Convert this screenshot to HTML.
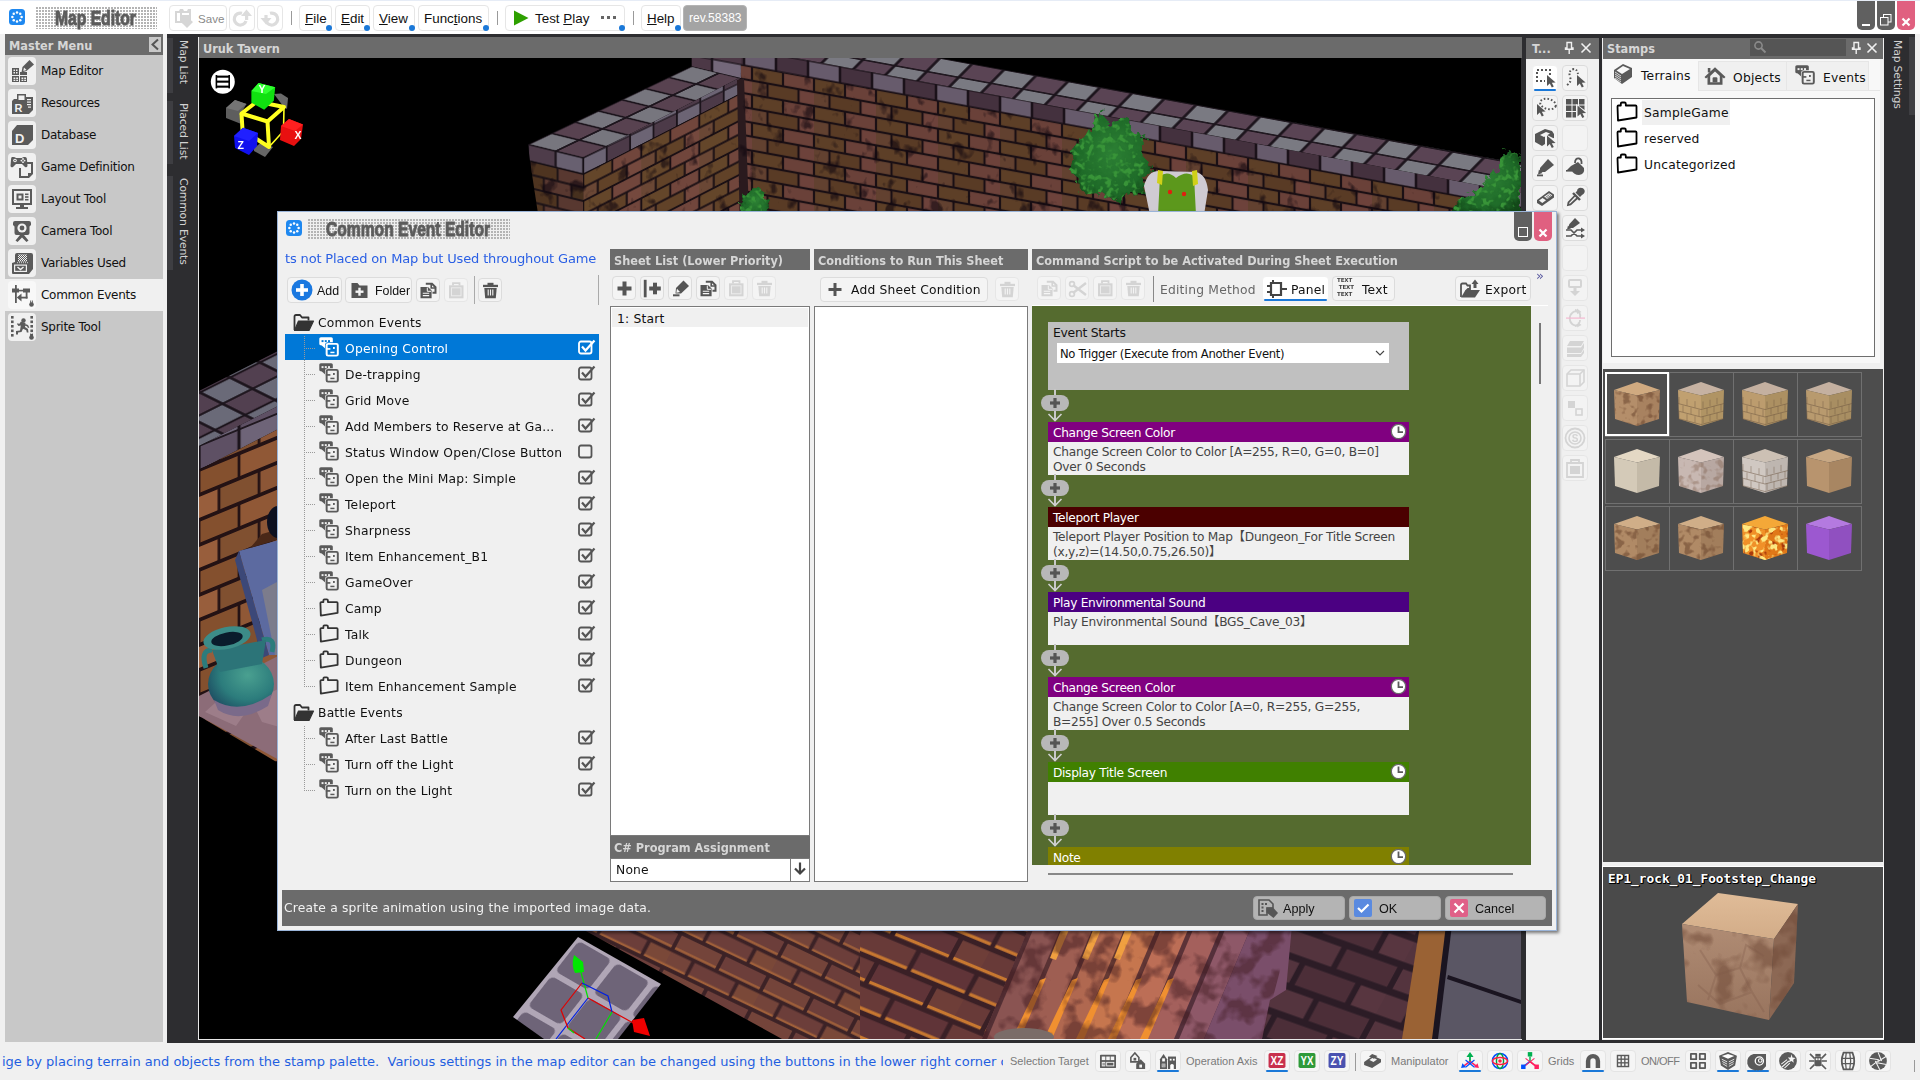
<!DOCTYPE html>
<html><head><meta charset="utf-8"><title>Map Editor</title>
<style>
*{box-sizing:border-box;margin:0;padding:0}
html,body{width:1920px;height:1080px;overflow:hidden;background:#f0f0f0}
body{font-family:"DejaVu Sans","Liberation Sans","Noto Sans CJK JP",sans-serif;font-size:13px;color:#111;position:relative}
div,svg{position:absolute}
.t{white-space:nowrap;line-height:16px;letter-spacing:-0.1px}
.lib{font-family:"Liberation Sans","DejaVu Sans",sans-serif;letter-spacing:0}
.btn{border:1px solid #dcdcdc;border-radius:4px;background:#f4f4f4}
.btnw{border:1px solid #e2e2e2;border-radius:4px;background:#fcfcfc}
.sel{background:#fff;border-color:#f0f0f0}
.sel:after{content:"";position:absolute;left:1px;right:1px;bottom:-1px;height:2px;background:#1a78d8;border-radius:1px}
.hdr{background:#6b6b6b;color:#d6d6d6;font-family:"DejaVu Sans Condensed","DejaVu Sans",sans-serif;font-weight:bold;white-space:nowrap;line-height:20px;padding-left:4px;overflow:hidden;letter-spacing:0}
.m{font-size:12.3px;letter-spacing:0.2px;margin-top:1px}
.u{font-size:12px;letter-spacing:-0.27px}
.dots{background-color:#b4b4b4;background-image:linear-gradient(#fff 1px,transparent 1px),linear-gradient(90deg,#fff 1px,transparent 1px);background-size:3px 3px}
.dots2{background-image:linear-gradient(#f0f0f0 1px,transparent 1px),linear-gradient(90deg,#f0f0f0 1px,transparent 1px)}
.title{font-family:"Liberation Sans","DejaVu Sans",sans-serif;font-weight:bold;color:#5c5c5c;white-space:nowrap;transform-origin:0 0;-webkit-text-stroke:0.9px #5c5c5c;text-shadow:1px 1px 0 #d0d0d0}
.vt{writing-mode:vertical-rl;white-space:nowrap;color:#d2d2d2;font-size:10.8px;letter-spacing:-0.15px}
</style></head>
<body>
<svg width="0" height="0" style="position:absolute"><defs><pattern id="chk" width="2" height="2" patternUnits="userSpaceOnUse"><rect width="1" height="1" fill="#5a5a5a"/><rect x="1" y="1" width="1" height="1" fill="#5a5a5a"/></pattern></defs></svg>
<div style="left:0px;top:0px;width:1920px;height:34px;background:#fff"></div>
<div style="left:0px;top:0px;width:1920px;height:1px;background:#e6ecf6"></div>
<svg style="left:9px;top:9px;" width="16" height="16" viewBox="0 0 16 16"><rect x="0" y="0" width="16" height="16" rx="3.5" fill="#1e88f0"/><circle cx="12.60" cy="8.00" r="1.25" fill="#fff"/><circle cx="11.25" cy="11.25" r="1.25" fill="#fff"/><circle cx="8.00" cy="12.60" r="1.25" fill="#fff"/><circle cx="4.75" cy="11.25" r="1.25" fill="#fff"/><circle cx="3.40" cy="8.00" r="1.25" fill="#fff"/><circle cx="4.75" cy="4.75" r="1.25" fill="#fff"/><circle cx="8.00" cy="3.40" r="1.25" fill="#fff"/><circle cx="11.25" cy="4.75" r="1.25" fill="#fff"/></svg>
<div class="dots" style="left:35px;top:6px;width:122px;height:23px;"></div>
<div class="title" style="left:55px;top:6px;font-size:21px;line-height:23px;transform:scaleX(0.745);">Map Editor</div>
<div class="btn" style="left:169px;top:5px;width:58px;height:26px;background:#fff;border-color:#e6e6e6"></div>
<svg style="left:174px;top:8px;" width="21" height="21" viewBox="0 0 21 21"><g fill="#d6d6d6"><path d="M1 3 H5 L6 1 H9 L10 3 H13 L14 1 H17 V12 L12 17 L8 15 H1Z"/></g><g fill="#fff"><path d="M3 5 H6 V13 H3Z"/><path d="M8 5 H15 V7 H8Z"/></g><path d="M12 8 L19 14 L13 20 L7 14Z" fill="#d6d6d6"/></svg>
<div class="t lib" style="left:198px;top:11px;color:#8a8a8a;font-size:11.6px">Save</div>
<div class="btn" style="left:229px;top:5px;width:26px;height:26px;background:#fff;border-color:#e6e6e6"></div>
<div class="btn" style="left:257px;top:5px;width:26px;height:26px;background:#fff;border-color:#e6e6e6"></div>
<svg style="left:231px;top:7px;" width="22" height="22" viewBox="0 0 22 22"><path d="M15 14 A6 6 0 1 1 11 6.3" fill="none" stroke="#dcdcdc" stroke-width="3.2"/><path d="M10 9 L15.5 2.5 L21 9Z" fill="#dcdcdc"/><rect x="14" y="8" width="3.2" height="5" fill="#dcdcdc"/></svg>
<svg style="left:259px;top:7px;transform:scale(1,1)" width="22" height="22" viewBox="0 0 22 22"><path d="M7 14 A6 6 0 1 0 11 6.3" fill="none" stroke="#dcdcdc" stroke-width="3.2" transform="translate(0,0)"/><path d="M1.5 11 L7 17.5 L12.5 11Z" fill="#dcdcdc"/><rect x="5.4" y="8" width="3.2" height="4" fill="#dcdcdc"/></svg>
<div style="left:291px;top:11px;width:1px;height:14px;background:#9a9a9a"></div>
<div class="btn" style="left:299px;top:5px;width:33px;height:26px;background:#fff;border-color:#e6e6e6"></div><div class="t lib" style="left:305px;top:11px;font-size:13.4px;color:#111"><u>F</u>ile</div><div style="left:326px;top:25px;width:6px;height:6px;background:#1a78d8;border-radius:3px"></div>
<div class="btn" style="left:335px;top:5px;width:35px;height:26px;background:#fff;border-color:#e6e6e6"></div><div class="t lib" style="left:341px;top:11px;font-size:13.4px;color:#111"><u>E</u>dit</div><div style="left:364px;top:25px;width:6px;height:6px;background:#1a78d8;border-radius:3px"></div>
<div class="btn" style="left:373px;top:5px;width:42px;height:26px;background:#fff;border-color:#e6e6e6"></div><div class="t lib" style="left:379px;top:11px;font-size:13.4px;color:#111"><u>V</u>iew</div><div style="left:409px;top:25px;width:6px;height:6px;background:#1a78d8;border-radius:3px"></div>
<div class="btn" style="left:418px;top:5px;width:71px;height:26px;background:#fff;border-color:#e6e6e6"></div><div class="t lib" style="left:424px;top:11px;font-size:13.4px;color:#111">Func<u>t</u>ions</div><div style="left:483px;top:25px;width:6px;height:6px;background:#1a78d8;border-radius:3px"></div>
<div style="left:497px;top:11px;width:1px;height:14px;background:#9a9a9a"></div>
<div class="btn" style="left:505px;top:5px;width:120px;height:26px;background:#fff;border-color:#e6e6e6"></div>
<svg style="left:513px;top:10px;" width="16" height="16" viewBox="0 0 16 16"><path d="M1 0.5 L15.5 8 L1 15.5Z" fill="#2ea000"/></svg>
<div class="t lib" style="left:535px;top:11px;font-size:13.4px;color:#111">Test <u>P</u>lay</div>
<div style="left:601px;top:16px;width:3px;height:3px;background:#666"></div>
<div style="left:607px;top:16px;width:3px;height:3px;background:#666"></div>
<div style="left:613px;top:16px;width:3px;height:3px;background:#666"></div>
<div style="left:619px;top:25px;width:6px;height:6px;background:#1a78d8;border-radius:3px"></div>
<div style="left:633px;top:11px;width:1px;height:14px;background:#9a9a9a"></div>
<div class="btn" style="left:641px;top:5px;width:40px;height:26px;background:#fff;border-color:#e6e6e6"></div><div class="t lib" style="left:647px;top:11px;font-size:13.4px;color:#111"><u>H</u>elp</div><div style="left:675px;top:25px;width:6px;height:6px;background:#1a78d8;border-radius:3px"></div>
<div style="left:683px;top:5px;width:64px;height:26px;background:#a4a4a4;border-radius:4px;border:1px solid #b4b4b4"></div>
<div class="t lib" style="left:689px;top:10px;font-size:12px;color:#fff">rev.58383</div>
<div style="left:1857px;top:1px;width:18px;height:29px;background:#606060;border-radius:0 0 5px 5px"></div>
<div style="left:1877px;top:1px;width:18px;height:29px;background:#606060;border-radius:0 0 5px 5px"></div>
<div style="left:1897px;top:1px;width:18px;height:29px;background:#e06080;border-radius:0 0 5px 5px"></div>
<div style="left:1862px;top:24px;width:8px;height:2px;background:#fff"></div>
<svg style="left:1879px;top:13px;" width="14" height="14" viewBox="0 0 14 14"><rect x="4.5" y="1.5" width="7.5" height="7.5" fill="none" stroke="#fff" stroke-width="1"/><rect x="1.5" y="4.5" width="7.5" height="7.5" fill="#606060" stroke="#fff" stroke-width="1"/></svg>
<svg style="left:1901px;top:17px;" width="10" height="10" viewBox="0 0 10 10"><path d="M1.5 1.5 L8.5 8.5 M8.5 1.5 L1.5 8.5" stroke="#fff" stroke-width="2.2"/></svg>
<div style="left:5px;top:34px;width:158px;height:1008px;background:#c8c8c8"></div>
<div class="hdr" style="left:5px;top:34px;width:158px;height:21px;font-size:12.6px;line-height:24px">Master Menu</div>
<div style="left:149px;top:37px;width:12px;height:15px;background:#c8c8c8"></div>
<svg style="left:149px;top:37px;" width="12" height="15" viewBox="0 0 12 15"><path d="M9 2.5 L3.5 7.5 L9 12.5" fill="none" stroke="#555" stroke-width="2"/></svg>
<div style="left:8px;top:57px;width:28px;height:28px;background:#f0f0f0;border-radius:4px"></div>
<svg style="left:8px;top:57px;" width="28" height="28" viewBox="0 0 28 28"><g fill="#5a5a5a"><rect x="4" y="11" width="7" height="7"/><rect x="4" y="19" width="7" height="6"/><rect x="12" y="19" width="7" height="6"/><rect x="12" y="15" width="7" height="3"/><g fill="#f0f0f0"><rect x="5.5" y="12.5" width="1.5" height="1.5"/><rect x="8" y="12.5" width="1.5" height="1.5"/><rect x="5.5" y="15" width="1.5" height="1.5"/><rect x="8" y="15" width="1.5" height="1.5"/><rect x="5.5" y="20.5" width="1.8" height="1.5"/><rect x="8.2" y="20.5" width="1.8" height="1.5"/><rect x="13.5" y="20.5" width="1.8" height="1.5"/><rect x="16.2" y="20.5" width="1.8" height="1.5"/><rect x="5.5" y="22.7" width="1.8" height="1.3"/><rect x="8.2" y="22.7" width="1.8" height="1.3"/><rect x="13.5" y="22.7" width="1.8" height="1.3"/><rect x="16.2" y="22.7" width="1.8" height="1.3"/></g><path d="M21.5 3 L26 7.5 L18.5 14 L13.5 15.5 L14.5 10 Z"/><path d="M16 10.5 L18.5 13 L15.3 14 Z" fill="#f0f0f0"/></g></svg>
<div class="t u" style="left:41px;top:63px;">Map Editor</div>
<div style="left:8px;top:89px;width:28px;height:28px;background:#f0f0f0;border-radius:4px"></div>
<svg style="left:8px;top:89px;" width="28" height="28" viewBox="0 0 28 28"><g fill="#5a5a5a"><path d="M9 5 H18 V8 H25 V21 L21 25 H4 V12 L6 10 H9 Z"/><path d="M10.5 6.5 H16.5 V11 H10.5Z" fill="#f0f0f0"/><g fill="#f0f0f0"><rect x="19" y="10" width="4" height="1.2"/><rect x="19" y="12.5" width="4" height="1.2"/><rect x="19" y="15" width="4" height="1.2"/><rect x="20" y="17.5" width="3" height="1.2"/></g><text x="6.5" y="23" font-family="Liberation Sans" font-weight="bold" font-size="11" fill="#f0f0f0">R</text></g></svg>
<div class="t u" style="left:41px;top:95px;">Resources</div>
<div style="left:8px;top:121px;width:28px;height:28px;background:#f0f0f0;border-radius:4px"></div>
<svg style="left:8px;top:121px;" width="28" height="28" viewBox="0 0 28 28"><g fill="#5a5a5a"><path d="M4 10 L9 4 H25 V19 L20 24 H4 Z"/><text x="7" y="22" font-family="Liberation Sans" font-weight="bold" font-size="13" fill="#f0f0f0">D</text></g></svg>
<div class="t u" style="left:41px;top:127px;">Database</div>
<div style="left:8px;top:153px;width:28px;height:28px;background:#f0f0f0;border-radius:4px"></div>
<svg style="left:8px;top:153px;" width="28" height="28" viewBox="0 0 28 28"><g fill="#5a5a5a"><path d="M4 4 Q3 4 3 7 L2.5 13 Q3 15 5 14 L8 11 H14 L17 14 Q19.5 15 19.5 12.5 L19 7 Q19 4 17 4 Q15 3.5 14 5 H8 Q7 3.5 4 4Z"/><circle cx="7" cy="7.5" r="1.8" fill="#f0f0f0"/><circle cx="7" cy="7.5" r="0.8"/><circle cx="15" cy="6" r="0.9" fill="#f0f0f0"/><circle cx="15" cy="9.2" r="0.9" fill="#f0f0f0"/><circle cx="13.4" cy="7.6" r="0.9" fill="#f0f0f0"/><circle cx="16.6" cy="7.6" r="0.9" fill="#f0f0f0"/><path d="M19 9 H25 V21 L21 25 H11 V15 H13 V23 H20 V20 H23 V11 H19Z"/></g></svg>
<div class="t u" style="left:41px;top:159px;">Game Definition</div>
<div style="left:8px;top:185px;width:28px;height:28px;background:#f0f0f0;border-radius:4px"></div>
<svg style="left:8px;top:185px;" width="28" height="28" viewBox="0 0 28 28"><g fill="#5a5a5a"><path d="M4 4 H24 V20 H4Z M6 6 V18 H22 V6Z" fill-rule="evenodd"/><path d="M8.5 8.5 H15.5 V15.5 H8.5Z M10.5 10.5 V13.5 H13.5 V10.5Z" fill-rule="evenodd"/><rect x="17" y="8.5" width="3.5" height="1.6"/><rect x="17" y="11.2" width="3.5" height="1.6"/><rect x="17" y="13.9" width="3.5" height="1.6"/><path d="M12 20 H16 V22 H20 V24 H8 V22 H12Z"/></g></svg>
<div class="t u" style="left:41px;top:191px;">Layout Tool</div>
<div style="left:8px;top:217px;width:28px;height:28px;background:#f0f0f0;border-radius:4px"></div>
<svg style="left:8px;top:217px;" width="28" height="28" viewBox="0 0 28 28"><g fill="#5a5a5a"><path d="M7 4 H21 Q23 4 23 6 V8 L21.5 9.5 V16 Q21.5 18 19.5 18 H8.5 Q6.5 18 6.5 16 V9.5 L5 8 V6 Q5 4 7 4Z"/><circle cx="14" cy="11" r="4.6" fill="#f0f0f0"/><circle cx="14" cy="11" r="2.4"/><path d="M12 18 H16 L20.5 23.5 L18.5 25 L14 20.5 L9.5 25 L7.5 23.5Z"/></g></svg>
<div class="t u" style="left:41px;top:223px;">Camera Tool</div>
<div style="left:8px;top:249px;width:28px;height:28px;background:#f0f0f0;border-radius:4px"></div>
<svg style="left:8px;top:249px;" width="28" height="28" viewBox="0 0 28 28"><g fill="#5a5a5a"><path d="M9 4 H23 Q25 4 25 6 V20 L21 25 H5 Q4 25 4 24 V14 L7 13 V6 Q7 4 9 4Z"/><rect x="10" y="5.5" width="9" height="7" fill="#f0f0f0"/><rect x="10" y="5.5" width="9" height="7" fill="url(#chk)"/><path d="M6 15.5 H19 V23 H6Z" fill="#f0f0f0"/><path d="M7.2 16.7 H17.8 V21.8 H7.2Z"/><path d="M9.5 18 L12.5 20.5 L15.5 18" stroke="#f0f0f0" stroke-width="1.5" fill="none"/><path d="M9 13.7 H20" stroke="#f0f0f0" stroke-width="0.8" stroke-dasharray="1 1"/></g></svg>
<div class="t u" style="left:41px;top:255px;">Variables Used</div>
<div style="left:5px;top:279px;width:158px;height:32px;background:#f0f0f0"></div>
<div style="left:8px;top:281px;width:28px;height:28px;background:#f8f8f8;border-radius:4px"></div>
<svg style="left:8px;top:281px;" width="28" height="28" viewBox="0 0 28 28"><g fill="#5a5a5a"><rect x="4" y="7.5" width="7" height="4"/><rect x="15" y="7.5" width="7" height="4"/><rect x="7" y="4" width="1.8" height="18"/><rect x="11" y="8.8" width="4" height="1.6"/><rect x="17.7" y="11" width="1.8" height="6.5"/><rect x="11" y="15.7" width="8.5" height="1.8"/><path d="M13.5 12.5 V20.5 L8.8 16.5Z"/><circle cx="23.5" cy="23.5" r="2.3"/><rect x="22.2" y="19.5" width="0.9" height="2.5"/><rect x="23.9" y="19.5" width="0.9" height="2.5"/></g></svg>
<div class="t u" style="left:41px;top:287px;">Common Events</div>
<div style="left:8px;top:313px;width:28px;height:28px;background:#f0f0f0;border-radius:4px"></div>
<svg style="left:8px;top:313px;" width="28" height="28" viewBox="0 0 28 28"><g fill="#5a5a5a"><rect x="3" y="3" width="2.6" height="2.6"/><rect x="22.4" y="3" width="2.6" height="2.6"/><rect x="3" y="7.5" width="2.6" height="2.6"/><rect x="22.4" y="7.5" width="2.6" height="2.6"/><rect x="3" y="12" width="2.6" height="2.6"/><rect x="22.4" y="12" width="2.6" height="2.6"/><rect x="3" y="16.5" width="2.6" height="2.6"/><rect x="22.4" y="16.5" width="2.6" height="2.6"/><rect x="3" y="21" width="2.6" height="2.6"/><rect x="22.4" y="21" width="2.6" height="2.6"/><circle cx="15.5" cy="7.5" r="2.2"/><path d="M13 8.5 L17.5 10 L17 14 L20 16 L20.5 19.5 L18.8 19.5 L18.3 17.2 L15 15.8 L13.5 19 L10 19.5 L10 21.5 L8 21.5 L8 18 L12 17.5 L12.8 12.5 L10.5 13 L9 11 L10 10 L11 11.3Z"/><path d="M17.3 11 L20 12 L21.3 14.5 L20 15 L19 13.3 L17 12.8Z"/><circle cx="23.5" cy="24.5" r="2.3"/><rect x="22.2" y="20.5" width="0.9" height="2.5"/><rect x="23.9" y="20.5" width="0.9" height="2.5"/></g></svg>
<div class="t u" style="left:41px;top:319px;">Sprite Tool</div>
<div style="left:167px;top:34px;width:1748px;height:1009px;background:#2d2d30"></div>
<div style="left:167px;top:38px;width:6px;height:55px;background:#3e3e42"></div>
<div style="left:167px;top:101px;width:6px;height:63px;background:#3e3e42"></div>
<div style="left:167px;top:176px;width:6px;height:94px;background:#3e3e42"></div>
<div class="vt" style="left:177px;top:40px;">Map List</div>
<div class="vt" style="left:177px;top:103px;">Placed List</div>
<div class="vt" style="left:177px;top:178px;">Common Events</div>
<div style="left:1909px;top:37px;width:6px;height:78px;background:#3e3e42"></div>
<div class="vt" style="left:1891px;top:40px;">Map Settings</div>
<div class="hdr" style="left:198px;top:37px;width:1324px;height:21px;font-size:12.6px;border-left:1px solid #e8e8e8;padding-left:4px;line-height:23px">Uruk Tavern</div>
<div style="left:198px;top:58px;width:1px;height:982px;background:#e8e8e8"></div>
<svg style="left:199px;top:58px;" width="1322" height="981" viewBox="199 58 1322 981"><defs><pattern id="cap1" width="2" height="2" patternUnits="userSpaceOnUse" patternTransform="matrix(23.4 -11.2 27.65 6.75 528 144.5)"><rect width="2" height="2" fill="#1c141c"/><rect x="0.05" y="0.05" width="0.9" height="0.9" fill="#77767e"/><rect x="1.05" y="0.05" width="0.9" height="0.9" fill="#584250"/><rect x="0.05" y="1.05" width="0.9" height="0.9" fill="#584250"/><rect x="1.05" y="1.05" width="0.9" height="0.9" fill="#77767e"/></pattern><pattern id="cap1b" width="2" height="2" patternUnits="userSpaceOnUse" patternTransform="matrix(23.4 -11.2 0 16 583.3 158)"><rect width="2" height="2" fill="#1c141c"/><rect x="0.04" y="0.04" width="0.92" height="0.92" fill="#6c6474"/><rect x="1.04" y="0.04" width="0.92" height="0.92" fill="#4c3a48"/><rect x="0.04" y="1.04" width="0.92" height="0.92" fill="#4c3a48"/><rect x="1.04" y="1.04" width="0.92" height="0.92" fill="#6c6474"/></pattern><pattern id="cap1c" width="2" height="2" patternUnits="userSpaceOnUse" patternTransform="matrix(27.65 6.75 0 16 528 144.5)"><rect width="2" height="2" fill="#1c141c"/><rect x="0.04" y="0.04" width="0.92" height="0.92" fill="#4e3c4a"/><rect x="1.04" y="0.04" width="0.92" height="0.92" fill="#686070"/><rect x="0.04" y="1.04" width="0.92" height="0.92" fill="#686070"/><rect x="1.04" y="1.04" width="0.92" height="0.92" fill="#4e3c4a"/></pattern><pattern id="brk1" width="2" height="2" patternUnits="userSpaceOnUse" patternTransform="matrix(29 -14.9 0 13.5 583.3 174)"><rect width="2" height="2" fill="#1c1216"/><rect x="0.035" y="0.080" width="0.930" height="0.840" fill="#6e4e2e"/><rect x="1.035" y="0.080" width="0.930" height="0.840" fill="#7c4e42"/><rect x="2.035" y="0.080" width="0.930" height="0.840" fill="#62442a"/><rect x="-0.465" y="1.080" width="0.930" height="0.840" fill="#74503a"/><rect x="0.535" y="1.080" width="0.930" height="0.840" fill="#6a4a2c"/><rect x="1.535" y="1.080" width="0.930" height="0.840" fill="#805244"/></pattern><pattern id="brk1b" width="2" height="2" patternUnits="userSpaceOnUse" patternTransform="matrix(27.65 6.75 0 13.5 530 161)"><rect width="2" height="2" fill="#1c1216"/><rect x="0.035" y="0.080" width="0.930" height="0.840" fill="#4e3420"/><rect x="1.035" y="0.080" width="0.930" height="0.840" fill="#583830"/><rect x="2.035" y="0.080" width="0.930" height="0.840" fill="#46301e"/><rect x="-0.465" y="1.080" width="0.930" height="0.840" fill="#4e3420"/><rect x="0.535" y="1.080" width="0.930" height="0.840" fill="#583830"/><rect x="1.535" y="1.080" width="0.930" height="0.840" fill="#46301e"/></pattern><pattern id="cap2" width="2" height="2" patternUnits="userSpaceOnUse" patternTransform="matrix(32 5.86 -13.3 13.5 940 58)"><rect width="2" height="2" fill="#1c141c"/><rect x="0.05" y="0.05" width="0.9" height="0.9" fill="#7a7a82"/><rect x="1.05" y="0.05" width="0.9" height="0.9" fill="#5a4454"/><rect x="0.05" y="1.05" width="0.9" height="0.9" fill="#5a4454"/><rect x="1.05" y="1.05" width="0.9" height="0.9" fill="#7a7a82"/></pattern><pattern id="cap2b" width="2" height="2" patternUnits="userSpaceOnUse" patternTransform="matrix(32 5.86 0 16 1000 96)"><rect width="2" height="2" fill="#1c141c"/><rect x="0.04" y="0.04" width="0.92" height="0.92" fill="#74687a"/><rect x="1.04" y="0.04" width="0.92" height="0.92" fill="#4c3846"/><rect x="0.04" y="1.04" width="0.92" height="0.92" fill="#4c3846"/><rect x="1.04" y="1.04" width="0.92" height="0.92" fill="#74687a"/></pattern><pattern id="brk2" width="2" height="2" patternUnits="userSpaceOnUse" patternTransform="matrix(31 5.67 0 14 1000 112)"><rect width="2" height="2" fill="#1c1216"/><rect x="0.035" y="0.080" width="0.930" height="0.840" fill="#68482c"/><rect x="1.035" y="0.080" width="0.930" height="0.840" fill="#774a40"/><rect x="2.035" y="0.080" width="0.930" height="0.840" fill="#5c3e28"/><rect x="-0.465" y="1.080" width="0.930" height="0.840" fill="#6e4a36"/><rect x="0.535" y="1.080" width="0.930" height="0.840" fill="#64442a"/><rect x="1.535" y="1.080" width="0.930" height="0.840" fill="#7a4c42"/></pattern><pattern id="cap3" width="2" height="2" patternUnits="userSpaceOnUse" patternTransform="matrix(30 -15 22.5 11.25 200 392.5)"><rect width="2" height="2" fill="#1c141c"/><rect x="0.05" y="0.05" width="0.9" height="0.9" fill="#6a6a78"/><rect x="1.05" y="0.05" width="0.9" height="0.9" fill="#524050"/><rect x="0.05" y="1.05" width="0.9" height="0.9" fill="#524050"/><rect x="1.05" y="1.05" width="0.9" height="0.9" fill="#6a6a78"/></pattern><pattern id="cap3b" width="2" height="2" patternUnits="userSpaceOnUse" patternTransform="matrix(40 -16.5 0 24 199 446)"><rect width="2" height="2" fill="#1c141c"/><rect x="0.04" y="0.04" width="0.92" height="0.92" fill="#5e5064"/><rect x="1.04" y="0.04" width="0.92" height="0.92" fill="#6e6478"/><rect x="0.04" y="1.04" width="0.92" height="0.92" fill="#6e6478"/><rect x="1.04" y="1.04" width="0.92" height="0.92" fill="#5e5064"/></pattern><pattern id="brk3" width="2" height="2" patternUnits="userSpaceOnUse" patternTransform="matrix(40 -16.5 0 25 199 470)"><rect width="2" height="2" fill="#241214"/><rect x="0.035" y="0.080" width="0.930" height="0.840" fill="#84502e"/><rect x="1.035" y="0.080" width="0.930" height="0.840" fill="#905836"/><rect x="2.035" y="0.080" width="0.930" height="0.840" fill="#7a482a"/><rect x="-0.465" y="1.080" width="0.930" height="0.840" fill="#985e3c"/><rect x="0.535" y="1.080" width="0.930" height="0.840" fill="#805030"/><rect x="1.535" y="1.080" width="0.930" height="0.840" fill="#8c5636"/></pattern><pattern id="fbrk" width="2" height="2" patternUnits="userSpaceOnUse" patternTransform="matrix(44 21 -9 17 575 925)"><rect width="2" height="2" fill="#3c2226"/><rect x="0.040" y="0.100" width="0.920" height="0.800" fill="#74443a"/><rect x="0.040" y="0.780" width="0.920" height="0.12" fill="#a0603a"/><rect x="1.040" y="0.100" width="0.920" height="0.800" fill="#6c3e3a"/><rect x="1.040" y="0.780" width="0.920" height="0.12" fill="#a0603a"/><rect x="2.040" y="0.100" width="0.920" height="0.800" fill="#7a4838"/><rect x="2.040" y="0.780" width="0.920" height="0.12" fill="#a0603a"/><rect x="-0.460" y="1.100" width="0.920" height="0.800" fill="#74443a"/><rect x="-0.460" y="1.780" width="0.920" height="0.12" fill="#a0603a"/><rect x="0.540" y="1.100" width="0.920" height="0.800" fill="#6c3e3a"/><rect x="0.540" y="1.780" width="0.920" height="0.12" fill="#a0603a"/><rect x="1.540" y="1.100" width="0.920" height="0.800" fill="#7a4838"/><rect x="1.540" y="1.780" width="0.920" height="0.12" fill="#a0603a"/></pattern><pattern id="fbrk2" width="2" height="2" patternUnits="userSpaceOnUse" patternTransform="matrix(58 24 -13 24 862 925)"><rect width="2" height="2" fill="#3a2026"/><rect x="0.040" y="0.100" width="0.920" height="0.800" fill="#683a38"/><rect x="0.040" y="0.780" width="0.920" height="0.12" fill="#c87830"/><rect x="1.040" y="0.100" width="0.920" height="0.800" fill="#603438"/><rect x="1.040" y="0.780" width="0.920" height="0.12" fill="#c87830"/><rect x="2.040" y="0.100" width="0.920" height="0.800" fill="#6e3e38"/><rect x="2.040" y="0.780" width="0.920" height="0.12" fill="#c87830"/><rect x="-0.460" y="1.100" width="0.920" height="0.800" fill="#683a38"/><rect x="-0.460" y="1.780" width="0.920" height="0.12" fill="#c87830"/><rect x="0.540" y="1.100" width="0.920" height="0.800" fill="#603438"/><rect x="0.540" y="1.780" width="0.920" height="0.12" fill="#c87830"/><rect x="1.540" y="1.100" width="0.920" height="0.800" fill="#6e3e38"/><rect x="1.540" y="1.780" width="0.920" height="0.12" fill="#c87830"/></pattern><pattern id="fbrk3" width="2" height="2" patternUnits="userSpaceOnUse" patternTransform="matrix(56 20 -14 26 1290 925)"><rect width="2" height="2" fill="#2c1c26"/><rect x="0.050" y="0.120" width="0.900" height="0.760" fill="#54343e"/><rect x="1.050" y="0.120" width="0.900" height="0.760" fill="#4c2e38"/><rect x="2.050" y="0.120" width="0.900" height="0.760" fill="#583640"/><rect x="-0.450" y="1.120" width="0.900" height="0.760" fill="#54343e"/><rect x="0.550" y="1.120" width="0.900" height="0.760" fill="#4c2e38"/><rect x="1.550" y="1.120" width="0.900" height="0.760" fill="#583640"/></pattern><pattern id="ptile" width="44" height="44" patternUnits="userSpaceOnUse" patternTransform="translate(578,937) rotate(30) skewX(-8)"><rect width="44" height="44" fill="#b0a6b6"/><rect x="3" y="3" width="38" height="38" rx="5" fill="#6e6478"/></pattern><radialGradient id="vase" cx="0.6" cy="0.35" r="0.7"><stop offset="0" stop-color="#4aa090"/><stop offset="0.6" stop-color="#2c7c7c"/><stop offset="1" stop-color="#1c4a60"/></radialGradient>
<radialGradient id="bush" cx="0.5" cy="0.45" r="0.6"><stop offset="0" stop-color="#2c8034"/><stop offset="0.7" stop-color="#1e6a28"/><stop offset="1" stop-color="#124818"/></radialGradient>
<linearGradient id="shade" x1="0" y1="0" x2="0" y2="1"><stop offset="0" stop-color="#000" stop-opacity="0"/><stop offset="1" stop-color="#000" stop-opacity="0.25"/></linearGradient>
<filter id="stain" x="0" y="0" width="100%" height="100%" color-interpolation-filters="sRGB"><feTurbulence type="fractalNoise" baseFrequency="0.07 0.05" numOctaves="3" seed="7"/><feColorMatrix values="0 0 0 0 0.07  0 0 0 0 0.03  0 0 0 0 0.06  -6 0 0 0 2.35"/></filter>
<filter id="mottle" x="0" y="0" width="100%" height="100%" color-interpolation-filters="sRGB"><feTurbulence type="fractalNoise" baseFrequency="0.045" numOctaves="3" seed="11"/><feColorMatrix values="0 0 0 0 0.25  0 0 0 0 0.1  0 0 0 0 0.12  -5 0 0 0 2.7"/></filter>
<filter id="leaf" x="-10%" y="-10%" width="120%" height="120%" color-interpolation-filters="sRGB"><feTurbulence type="fractalNoise" baseFrequency="0.16" numOctaves="2" seed="5" result="n"/><feDisplacementMap in="SourceGraphic" in2="n" scale="14" xChannelSelector="R" yChannelSelector="G" result="d"/><feColorMatrix in="n" values="0 0 0 0 0.22  0 0 0 0 0.58  0 0 0 0 0.22  6 0 0 0 -3.1" result="sp"/><feComposite in="sp" in2="d" operator="in" result="sp2"/><feMerge><feMergeNode in="d"/><feMergeNode in="sp2"/></feMerge></filter>
<clipPath id="cwall"><polygon points="740,64 1521,207 1521,240 740,240"/><polygon points="583.3,174 739.6,93.8 745,240 583.3,240"/><polygon points="530,161 583.3,174 583.3,240 542,240"/><polygon points="199,470 290,423 290,660 199,700"/></clipPath>
<clipPath id="clogs"><polygon points="1030,925 1292,925 1262,1039 982,1039"/></clipPath>
</defs><rect x="199" y="58" width="1322" height="981" fill="#000"/><polygon points="740,64 1521,207.3 1521,240 740,240" fill="url(#brk2)" /><polygon points="740,58 795.7,58 1521,192.9 1521,207.3 740,64.4" fill="url(#cap2b)" /><polygon points="795.7,58 940,58 1521,163.8 1521,192.9" fill="url(#cap2)" /><polygon points="740,58 795.7,58 1521,192.9 1521,240 740,240" fill="#100008" opacity="0.12"/><polygon points="528,144.5 691.7,66.3 739.6,77.8 583.3,158" fill="url(#cap1)" /><polygon points="583.3,158 739.6,77.8 739.6,93.8 583.3,174" fill="url(#cap1b)" /><polygon points="528,144.5 583.3,158 583.3,174 530,161" fill="url(#cap1c)" /><polygon points="530,161 583.3,174 583.3,240 542,240" fill="url(#brk1b)" /><polygon points="583.3,174 739.6,93.8 745,240 583.3,240" fill="url(#brk1)" /><polygon points="583.3,174 739.6,93.8 745,240 583.3,240" fill="#100008" opacity="0.1"/><polygon points="691.7,58 741,58 741,78 691.7,66.3" fill="url(#cap2b)" /><polygon points="737,80 744,78 750,240 740,240" fill="#2a1a1e" /><g clip-path="url(#cwall)" opacity="0.6"><rect x="199" y="58" width="1322" height="190" filter="url(#stain)"/><rect x="199" y="420" width="95" height="290" filter="url(#stain)" opacity="0.7"/></g><circle cx="755" cy="203" r="14" fill="url(#bush)" filter="url(#leaf)"/><path d="M1072 148 L1092 128 L1100 112 L1110 126 L1126 116 L1132 130 L1146 138 L1140 152 L1152 168 L1142 180 L1146 196 L1128 192 L1118 204 L1100 192 L1084 196 L1076 180 L1070 164Z" fill="url(#bush)" filter="url(#leaf)"/><path d="M1448 215 L1462 196 L1480 190 L1490 172 L1500 168 L1506 148 L1521 158 L1521 215Z" fill="url(#bush)" filter="url(#leaf)"/><path d="M1144 186 Q1148 170 1160 171 L1196 172 Q1206 174 1208 190 L1204 215 H1150Z" fill="#cfcbd2"/><path d="M1160 176 Q1168 170 1176 178 Q1186 170 1194 176 L1196 215 H1158Z" fill="#5c981c"/><path d="M1158 170 l5 1 l-1 14 l-5 -2Z M1192 171 l5 -1 l1 14 l-5 2Z" fill="#d0d018"/><circle cx="1170" cy="192" r="2.2" fill="#e02010"/><circle cx="1184" cy="194" r="2.2" fill="#e02010"/><polygon points="199,391 290,345 290,400 199,446" fill="url(#cap3)" /><polygon points="199,446 290,400 290,423 199,470" fill="url(#cap3b)" /><polygon points="199,470 290,423 290,770 199,716" fill="url(#brk3)" /><polygon points="199,696 290,650 290,766 199,716" fill="#8c6c78" /><path d="M205 712 L225 694 L250 706 L236 726Z M252 702 L280 688 L290 700 L290 730 L262 722Z" fill="#a48490" opacity="0.7"/><polygon points="239,551 290,537 290,655 269,655" fill="#5c6aa0" /><polygon points="262,590 290,575 290,655 275,655" fill="#7c7c8c" /><polygon points="239,551 269,655 262,658 235,560" fill="#3c4878" /><polygon points="250,548 290,536 290,526 262,534" fill="#4a2818" /><ellipse cx="278" cy="522" rx="11" ry="16" fill="#0c1020"/><path d="M206 668 Q200 650 212 650" fill="none" stroke="#2c7c7c" stroke-width="5"/><path d="M262 640 Q276 636 272 652" fill="none" stroke="#2c7c7c" stroke-width="5"/><ellipse cx="241" cy="684" rx="33" ry="29" fill="url(#vase)"/><path d="M214 700 Q240 716 272 694 L268 706 Q240 724 218 710Z" fill="#7a6a8a"/><path d="M212 650 L266 640 L262 664 L220 672Z" fill="#2c7478"/><ellipse cx="227" cy="638" rx="24" ry="11" fill="#3c8c88" transform="rotate(-12 227 638)"/><ellipse cx="227" cy="639" rx="16" ry="6.5" fill="#0a1c2c" transform="rotate(-12 227 639)"/><polygon points="578,937 661,984 618,1039 544,1039 513,1017" fill="url(#ptile)" /><polygon points="575,925 1010,925 1000,1039 782,1039" fill="url(#fbrk)" /><polygon points="860,925 1045,925 1000,1039 860,1039" fill="url(#fbrk2)" /><polygon points="1280,925 1420,925 1405,1039 1260,1039" fill="url(#fbrk3)" /><polygon points="1030,925 1068,925 1020,1039 982,1039" fill="#8a5452" /><polygon points="1030,925 1035,925 987,1039 982,1039" fill="#3c2028" opacity="0.7"/><polygon points="1062,925 1100,925 1052,1039 1014,1039" fill="#9e5e52" /><polygon points="1062,925 1067,925 1019,1039 1014,1039" fill="#3c2028" opacity="0.7"/><polygon points="1040,980 1046,978 1020,1039 1012,1039" fill="#f09030" /><polygon points="1063,925 1071,925 1056,960 1050,958" fill="#f0a040" /><polygon points="1094,925 1132,925 1084,1039 1046,1039" fill="#b06850" /><polygon points="1094,925 1099,925 1051,1039 1046,1039" fill="#3c2028" opacity="0.7"/><polygon points="1072,980 1078,978 1052,1039 1044,1039" fill="#f09030" /><polygon points="1095,925 1103,925 1088,960 1082,958" fill="#f0a040" /><polygon points="1126,925 1164,925 1116,1039 1078,1039" fill="#c6764e" /><polygon points="1126,925 1131,925 1083,1039 1078,1039" fill="#3c2028" opacity="0.7"/><polygon points="1104,980 1110,978 1084,1039 1076,1039" fill="#f09030" /><polygon points="1127,925 1135,925 1120,960 1114,958" fill="#f0a040" /><polygon points="1158,925 1196,925 1148,1039 1110,1039" fill="#bc6e56" /><polygon points="1158,925 1163,925 1115,1039 1110,1039" fill="#3c2028" opacity="0.7"/><polygon points="1136,980 1142,978 1116,1039 1108,1039" fill="#f09030" /><polygon points="1190,925 1228,925 1180,1039 1142,1039" fill="#a4605c" /><polygon points="1190,925 1195,925 1147,1039 1142,1039" fill="#3c2028" opacity="0.7"/><polygon points="1168,980 1174,978 1148,1039 1140,1039" fill="#f09030" /><polygon points="1222,925 1260,925 1212,1039 1174,1039" fill="#8e5868" /><polygon points="1222,925 1227,925 1179,1039 1174,1039" fill="#3c2028" opacity="0.7"/><polygon points="1252,925 1290,925 1242,1039 1204,1039" fill="#7e526c" /><polygon points="1252,925 1257,925 1209,1039 1204,1039" fill="#3c2028" opacity="0.7"/><polygon points="1252,925 1292,925 1286,990 1270,1000 1262,1039 1204,1039" fill="#7a4e6a" /><g clip-path="url(#clogs)"><rect x="980" y="925" width="320" height="114" filter="url(#mottle)" opacity="0.5"/></g><ellipse cx="1024" cy="1037" rx="30" ry="9" fill="#7a6c68"/><polygon points="1420,925 1450,925 1436,1039 1402,1039" fill="#9a6234" /><polygon points="1450,925 1521,925 1521,1039 1436,1039" fill="#5a5664" /><polygon points="1448,975 1521,1000 1521,1004 1447,979" fill="#1a1420" /><polygon points="1446,925 1452,925 1438,1039 1432,1039" fill="#1a1420" /><g stroke-width="1.2" fill="none"><path d="M579 965 L588 998" stroke="#00e000"/><path d="M588 998 L635 1024" stroke="#e00000"/><path d="M588 998 L556 1039" stroke="#0020e0"/><path d="M582 983 L561 1010 L568 1028 L585 1039" stroke="#e00000"/><path d="M582 983 L608 996 L612 1012" stroke="#0020e0"/><path d="M612 1012 L596 1039 M568 1028 L574 1033" stroke="#00e000"/></g><path d="M574 955 L583 962 L584 972 L575 973 Q571 965 574 955Z" fill="#00e800"/><path d="M632 1020 L644 1018 L650 1036 L634 1032Z" fill="#f00000"/><circle cx="222.8" cy="81.8" r="12" fill="#fff"/><g fill="#000"><rect x="216" y="75.6" width="13.6" height="2.1"/><rect x="216" y="80.6" width="13.6" height="2.1"/><rect x="216" y="85.6" width="13.6" height="2.1"/><rect x="215.6" y="75" width="1.6" height="13.4"/><rect x="228.4" y="75" width="1.6" height="13.4"/></g><polygon points="226,108 235,100 246.5,104 241,113 240,123.5 226,118" fill="#5e5e5e" /><polygon points="226,108 235,100 246.5,104 238,111" fill="#747474" /><polygon points="274,94 281,93.5 288,98 287,109 283,106" fill="#6a6a6a" /><polygon points="254,148 262,142 273,147 265,157 254,151" fill="#666" /><g fill="none" stroke="#ffff20" stroke-width="4" stroke-linejoin="round"><path d="M241.5 113.5 L257 101.5 L284 107 L267.5 121.5Z"/><path d="M241.5 113.5 L242.5 130 L269 147 L267.5 121.5"/></g><path d="M269 147 L283.5 131 L284 107" fill="none" stroke="#ffff20" stroke-width="1.6"/><polygon points="251.4,91 258.6,82.9 275.2,87.3 273.8,100.7 264.2,109.7 251.4,102.8" fill="#10e010" /><polygon points="251.4,91 258.6,82.9 275.2,87.3 266,94" fill="#30ff30" /><polygon points="281,126 289,119 303,124.5 301,139 294,146 280,140" fill="#e81010" /><polygon points="281,126 289,119 303,124.5 295,131" fill="#ff2020" /><polygon points="234,136 243,127.7 258,133 257,146 249,155 235,148" fill="#1010f0" /><polygon points="234,136 243,127.7 258,133 249,141" fill="#2020ff" /><g font-family="Liberation Sans" font-weight="bold" font-size="10.5" fill="#fff"><text x="258.5" y="93">Y</text><text x="294.5" y="139">X</text><text x="237.5" y="149">Z</text></g></svg>
<div style="left:198px;top:1039px;width:1324px;height:1px;background:#e8e8e8"></div>
<div style="left:1526px;top:38px;width:73px;height:1002px;background:#f0f0f0"></div>
<div class="hdr" style="left:1526px;top:38px;width:73px;height:21px;font-size:12.6px;line-height:22px;padding-left:6px">T...</div>
<svg style="left:1563px;top:41px;" width="12" height="14" viewBox="0 0 12 14"><path d="M4 1.5 H8.5 V7 H10 V8.2 H2.5 V7 H4Z M6.2 8 V13" fill="none" stroke="#f0f0f0" stroke-width="1.4"/></svg>
<svg style="left:1580px;top:42px;" width="12" height="12" viewBox="0 0 12 12"><path d="M1.5 1.5 L10.5 10.5 M10.5 1.5 L1.5 10.5" stroke="#f0f0f0" stroke-width="1.6"/></svg>
<div class="btn sel" style="left:1532px;top:65px;width:26px;height:26px;"></div>
<svg style="left:1532px;top:65px;" width="26" height="26" viewBox="0 0 26 26"><rect x="5" y="5" width="13" height="11" fill="none" stroke="#555" stroke-width="2" stroke-dasharray="2 2"/><rect x="13" y="11" width="8" height="8" fill="#fff"/><path transform="translate(15,10) scale(1.0)" d="M0 0 L0 11 L2.8 8.6 L4.8 12.6 L6.8 11.6 L4.8 7.8 L8.6 7.6Z" fill="#555"/></svg>
<div class="btn" style="left:1532px;top:95px;width:26px;height:26px;"></div>
<svg style="left:1532px;top:95px;" width="26" height="26" viewBox="0 0 26 26"><ellipse cx="16" cy="9" rx="8" ry="5" fill="none" stroke="#555" stroke-width="2" stroke-dasharray="1.6 2" transform="rotate(15 16 9)"/><path transform="translate(5,9) scale(1.0)" d="M0 0 L0 11 L2.8 8.6 L4.8 12.6 L6.8 11.6 L4.8 7.8 L8.6 7.6Z" fill="#555"/></svg>
<div class="btn" style="left:1532px;top:125px;width:26px;height:26px;"></div>
<svg style="left:1532px;top:125px;" width="26" height="26" viewBox="0 0 26 26"><path d="M3 9 L13 4 L20 6 L22 9 V13 L10 21 L3 17Z" fill="#555"/><path d="M8 10 L14 7 L18 8.5 L12 12Z" fill="#f4f4f4"/><path d="M13 9 L13 23 L24 23 L23 14Z" fill="#f4f4f4"/><path transform="translate(15,10.5) scale(1.0)" d="M0 0 L0 11 L2.8 8.6 L4.8 12.6 L6.8 11.6 L4.8 7.8 L8.6 7.6Z" fill="#555"/></svg>
<div class="btn" style="left:1532px;top:155px;width:26px;height:26px;"></div>
<svg style="left:1532px;top:155px;" width="26" height="26" viewBox="0 0 26 26"><path d="M16 4 L22 10 L13 17 L8 17 L8 13Z" fill="#555"/><path d="M7 14.5 L10.5 18 L6 19.5Z" fill="#555"/><rect x="5" y="19.5" width="6" height="1.8" fill="#555"/></svg>
<div class="btn" style="left:1532px;top:185px;width:26px;height:26px;"></div>
<svg style="left:1532px;top:185px;" width="26" height="26" viewBox="0 0 26 26"><path d="M5 15 L17 6 L22 9.5 V12.5 L10 21 L5 18Z" fill="#555"/><path d="M7 15.5 L10.5 13 L14 15.2 L10.3 18Z" fill="#f4f4f4"/><path d="M12 11.8 L17 8.2 L20.2 10.3 L15.4 14Z" fill="#f4f4f4"/><path d="M13.5 12.5 L17.5 9.5 M15 13.3 L19 10.3" stroke="#555" stroke-width="0.8"/></svg>
<div class="btn" style="left:1562px;top:65px;width:26px;height:26px;"></div>
<svg style="left:1562px;top:65px;" width="26" height="26" viewBox="0 0 26 26"><path d="M5 20 Q10 17 8 12 Q6 5 12 4 Q15 4 16 9" fill="none" stroke="#555" stroke-width="2" stroke-dasharray="1.6 2"/><path transform="translate(15,10) scale(1.0)" d="M0 0 L0 11 L2.8 8.6 L4.8 12.6 L6.8 11.6 L4.8 7.8 L8.6 7.6Z" fill="#555"/></svg>
<div class="btn" style="left:1562px;top:95px;width:26px;height:26px;"></div>
<svg style="left:1562px;top:95px;" width="26" height="26" viewBox="0 0 26 26"><rect x="4.0" y="4.0" width="5.5" height="5.5" fill="#555"/><rect x="4.0" y="10.5" width="5.5" height="5.5" fill="#555"/><rect x="4.0" y="17.0" width="5.5" height="5.5" fill="#555"/><rect x="10.5" y="4.0" width="5.5" height="5.5" fill="#555"/><rect x="10.5" y="10.5" width="5.5" height="5.5" fill="#555"/><rect x="10.5" y="17.0" width="5.5" height="5.5" fill="#555"/><rect x="17.0" y="4.0" width="5.5" height="5.5" fill="#555"/><rect x="17.0" y="10.5" width="5.5" height="5.5" fill="#555"/><rect x="17.0" y="17.0" width="5.5" height="5.5" fill="#555"/><path d="M14 9 L14 23 L24 23 L24 16Z" fill="#f4f4f4"/><path transform="translate(15.5,10.5) scale(1.0)" d="M0 0 L0 11 L2.8 8.6 L4.8 12.6 L6.8 11.6 L4.8 7.8 L8.6 7.6Z" fill="#555"/></svg>
<div class="btn" style="left:1562px;top:125px;width:26px;height:26px;border-color:#e6e6e6;background:#f3f3f3"></div>
<div class="btn" style="left:1562px;top:155px;width:26px;height:26px;"></div>
<svg style="left:1562px;top:155px;" width="26" height="26" viewBox="0 0 26 26"><path d="M9 11 L16 7 L22 13 Q23 19 17 20 Q12 20 9 15Z" fill="#555"/><path d="M13 8 Q13 3 17 3.5 Q20 4 19.5 9" fill="none" stroke="#555" stroke-width="1.8"/><path d="M9 11 L5 15 L9 15Z" fill="#555"/><rect x="4" y="15" width="6" height="1.6" fill="#555"/></svg>
<div class="btn" style="left:1562px;top:185px;width:26px;height:26px;"></div>
<svg style="left:1562px;top:185px;" width="26" height="26" viewBox="0 0 26 26"><path d="M17 3 Q21 2 22.5 5 Q23.5 8 20 10 L18 12 L13.5 7.5 L15 6 Q15 4 17 3Z" fill="#555"/><path d="M11 8 L18 15" stroke="#555" stroke-width="2.4"/><path d="M13.5 10 L6.5 17.5 L6 20 L8.5 19.5 L16 12.5" fill="none" stroke="#555" stroke-width="1.8"/></svg>
<div class="btn" style="left:1562px;top:215px;width:26px;height:26px;"></div>
<svg style="left:1562px;top:215px;" width="26" height="26" viewBox="0 0 26 26"><path d="M13 3 L18 8 L11 13 L7 13 L7 9.5Z" fill="#555"/><path d="M6 10.5 L9 13.5 L5 14.5Z" fill="#555"/><path d="M4 15 H9 L15 21 H20 M4 21 H9 L15 15 H20" fill="none" stroke="#555" stroke-width="1.7"/><path d="M19 12.5 L23 15 L19 17.5Z M19 18.5 L23 21 L19 23.5Z" fill="#555"/></svg>
<div class="btn" style="left:1562px;top:245px;width:26px;height:26px;border-color:#e6e6e6;background:#f3f3f3"></div>
<div class="btn" style="left:1562px;top:275px;width:26px;height:26px;border-color:#e6e6e6;background:#f3f3f3"></div>
<svg style="left:1562px;top:275px;" width="26" height="26" viewBox="0 0 26 26"><rect x="7" y="5" width="12" height="7" rx="1" fill="none" stroke="#d4d4d4" stroke-width="2"/><rect x="11.5" y="12" width="3" height="4" fill="#d4d4d4"/><path d="M8 16 H18 L13 21Z" fill="#d4d4d4"/></svg>
<div class="btn" style="left:1562px;top:305px;width:26px;height:26px;border-color:#e6e6e6;background:#f3f3f3"></div>
<svg style="left:1562px;top:305px;" width="26" height="26" viewBox="0 0 26 26"><path d="M16 7 A6 7 0 1 0 16 20" fill="none" stroke="#d4d4d4" stroke-width="1.8"/><path d="M13 5 A6 6 0 0 1 18 13 M18 15 A6 6 0 0 1 13 21" fill="none" stroke="#d4d4d4" stroke-width="1.8"/><path d="M15 3.5 L19.5 7 L15 9Z M16 17 L19.5 20 L15 22.5Z" fill="#d4d4d4"/><rect x="4" y="12.5" width="19" height="1.2" fill="#f4b8d0"/></svg>
<div class="btn" style="left:1562px;top:335px;width:26px;height:26px;border-color:#e6e6e6;background:#f3f3f3"></div>
<svg style="left:1562px;top:335px;" width="26" height="26" viewBox="0 0 26 26"><path d="M8 6 H22 L19 11 H5Z M5 12.5 H19 L22 8 V13 L19 18 H5Z M5 19 H19 L22 14.5 V18 L19 22 H5Z" fill="#d4d4d4"/></svg>
<div class="btn" style="left:1562px;top:365px;width:26px;height:26px;border-color:#e6e6e6;background:#f3f3f3"></div>
<svg style="left:1562px;top:365px;" width="26" height="26" viewBox="0 0 26 26"><path d="M5 9 L9 5 H22 V17 L18 21 H5Z" fill="none" stroke="#d4d4d4" stroke-width="1.6"/><path d="M5 9 H18 V21 M18 9 L22 5" fill="none" stroke="#d4d4d4" stroke-width="1.6"/></svg>
<div class="btn" style="left:1562px;top:395px;width:26px;height:26px;border-color:#e6e6e6;background:#f3f3f3"></div>
<svg style="left:1562px;top:395px;" width="26" height="26" viewBox="0 0 26 26"><rect x="6" y="6" width="7" height="7" fill="#d4d4d4"/><rect x="14" y="14" width="6" height="6" fill="none" stroke="#d4d4d4" stroke-width="1.6"/></svg>
<div class="btn" style="left:1562px;top:425px;width:26px;height:26px;border-color:#e6e6e6;background:#f3f3f3"></div>
<svg style="left:1562px;top:425px;" width="26" height="26" viewBox="0 0 26 26"><circle cx="13" cy="13" r="9.5" fill="none" stroke="#d4d4d4" stroke-width="1.8"/><circle cx="13" cy="13" r="6" fill="none" stroke="#d4d4d4" stroke-width="1.6"/><text x="9.8" y="17" font-family="Liberation Sans" font-weight="bold" font-size="10" fill="#d4d4d4">S</text></svg>
<div class="btn" style="left:1562px;top:455px;width:26px;height:26px;border-color:#e6e6e6;background:#f3f3f3"></div>
<svg style="left:1562px;top:455px;" width="26" height="26" viewBox="0 0 26 26"><path d="M5 8 H21 V22 H5Z M9 8 V5 H17 V8" fill="none" stroke="#d4d4d4" stroke-width="1.8"/><rect x="8" y="11" width="10" height="8" fill="#d4d4d4"/></svg>
<div style="left:1602px;top:38px;width:282px;height:1002px;background:#f0f0f0"></div>
<div class="hdr" style="left:1603px;top:38px;width:280px;height:21px;font-size:12.6px;line-height:22px;padding-left:4px">Stamps</div>
<div style="left:1750px;top:39px;width:96px;height:17px;background:#555"></div>
<svg style="left:1753px;top:40px;" width="14" height="14" viewBox="0 0 14 14"><circle cx="5.5" cy="5.5" r="3.6" fill="none" stroke="#8a8a8a" stroke-width="1.6"/><path d="M8 8 L12.5 12.5" stroke="#8a8a8a" stroke-width="2"/></svg>
<svg style="left:1850px;top:41px;" width="12" height="14" viewBox="0 0 12 14"><path d="M4 1.5 H8.5 V7 H10 V8.2 H2.5 V7 H4Z M6.2 8 V13" fill="none" stroke="#f0f0f0" stroke-width="1.4"/></svg>
<svg style="left:1866px;top:42px;" width="12" height="12" viewBox="0 0 12 12"><path d="M1.5 1.5 L10.5 10.5 M10.5 1.5 L1.5 10.5" stroke="#f0f0f0" stroke-width="1.6"/></svg>
<div style="left:1603px;top:59px;width:277px;height:304px;background:#f8f8f8"></div>
<div style="left:1698px;top:61px;width:89px;height:30px;background:#f0f0f0;border:1px solid #e6e6e6"></div>
<div style="left:1786px;top:61px;width:83px;height:30px;background:#f0f0f0;border:1px solid #e6e6e6"></div>
<div style="left:1869px;top:90px;width:11px;height:1px;background:#e6e6e6"></div>
<svg style="left:1613px;top:63px;" width="20" height="22" viewBox="0 0 20 22"><path d="M10 1 L19 5 V14 L9 21 L1 15 V7Z" fill="#5a5a5a"/><path d="M10 3 L17 6 L9 11 L3.5 7.5Z" fill="#f8f8f8"/><path d="M2 9 L8 13 M2 11 L8 15 M2 13 L8 17 M2 15 L8 19" stroke="#f8f8f8" stroke-width="0.8"/></svg>
<div class="t m" style="left:1641px;top:67px;">Terrains</div>
<svg style="left:1704px;top:66px;" width="22" height="20" viewBox="0 0 22 20"><path d="M11 1.2 L21.5 11 L20 12.6 L18.5 11.2 V18.8 H3.5 V11.2 L2 12.6 L0.5 11Z" fill="#5a5a5a"/><path d="M11 5.6 L15.8 10 V16.2 H6.2 V10Z" fill="#f0f0f0"/><path d="M8.6 16.2 V12.4 Q8.6 11.2 9.8 11.2 H12.2 Q13.4 11.2 13.4 12.4 V16.2Z" fill="#5a5a5a"/><rect x="3.8" y="2" width="2.6" height="4.5" fill="#5a5a5a"/></svg>
<div class="t m" style="left:1733px;top:69px;">Objects</div>
<svg style="left:1795px;top:65px;" width="20" height="20" viewBox="0 0 20.4 20.4"><rect x="0.3" y="0.3" width="13.8" height="8.2" rx="1.6" fill="#5a5a5a"/><path d="M2 8 H8 V13.2Z" fill="#5a5a5a"/><rect x="2.6" y="3.2" width="2" height="2" fill="#f0f0f0"/><rect x="5.9" y="3.2" width="2" height="2" fill="#f0f0f0"/><rect x="9.2" y="3.2" width="2" height="2" fill="#f0f0f0"/><rect x="7.8" y="7" width="11.4" height="12" rx="1.4" fill="#f0f0f0" stroke="#f0f0f0" stroke-width="3.2"/><rect x="7.8" y="7" width="11.4" height="12" rx="1.4" fill="#f0f0f0" stroke="#5a5a5a" stroke-width="2"/><rect x="14.3" y="10.2" width="1.8" height="2" fill="#5a5a5a"/><rect x="11.6" y="15" width="4.2" height="1.5" fill="#5a5a5a"/><rect x="7" y="11.3" width="4.6" height="1.7" fill="#5a5a5a"/></svg>
<div class="t m" style="left:1823px;top:69px;">Events</div>
<div style="left:1611px;top:98px;width:264px;height:259px;background:#fff;border:1px solid #6e6e6e"></div>
<div style="left:1642px;top:100px;width:88px;height:25px;background:#f0f0f0"></div>
<svg style="left:1616px;top:101px;" width="22" height="21" viewBox="0 0 22 21"><path d="M1.5 5.5 Q1.5 4.5 2.5 4.5 H4.8 V2.8 Q4.8 1.5 6 1.5 H8.5 Q9.8 1.5 9.8 2.8 V4.5 H19.5 Q20.5 4.5 20.5 5.5 V16.5 L2 19.5Z" fill="none" stroke="#000" stroke-width="1.8" stroke-linejoin="round"/></svg>
<div class="t m" style="left:1644px;top:104px;">SampleGame</div>
<svg style="left:1616px;top:127px;" width="22" height="21" viewBox="0 0 22 21"><path d="M1.5 5.5 Q1.5 4.5 2.5 4.5 H4.8 V2.8 Q4.8 1.5 6 1.5 H8.5 Q9.8 1.5 9.8 2.8 V4.5 H19.5 Q20.5 4.5 20.5 5.5 V16.5 L2 19.5Z" fill="none" stroke="#000" stroke-width="1.8" stroke-linejoin="round"/></svg>
<div class="t m" style="left:1644px;top:130px;">reserved</div>
<svg style="left:1616px;top:153px;" width="22" height="21" viewBox="0 0 22 21"><path d="M1.5 5.5 Q1.5 4.5 2.5 4.5 H4.8 V2.8 Q4.8 1.5 6 1.5 H8.5 Q9.8 1.5 9.8 2.8 V4.5 H19.5 Q20.5 4.5 20.5 5.5 V16.5 L2 19.5Z" fill="none" stroke="#000" stroke-width="1.8" stroke-linejoin="round"/></svg>
<div class="t m" style="left:1644px;top:156px;">Uncategorized</div>
<div style="left:1603px;top:369px;width:280px;height:493px;background:#4d4d4d"></div>
<svg style="left:1603px;top:369px;" width="280" height="493" viewBox="1603 369 280 493"><defs><filter id="mot2" x="0" y="0" width="100%" height="100%" color-interpolation-filters="sRGB"><feTurbulence type="fractalNoise" baseFrequency="0.13" numOctaves="2" seed="4"/><feColorMatrix values="0 0 0 0 0.42  0 0 0 0 0.27  0 0 0 0 0.18  -6 0 0 0 3.0"/></filter><filter id="lava" x="0" y="0" width="100%" height="100%" color-interpolation-filters="sRGB"><feTurbulence type="fractalNoise" baseFrequency="0.16" numOctaves="2" seed="9"/><feColorMatrix values="0 0 0 0 1  0 0 0 0 0.95  0 0 0 0 0.55  7 0 0 0 -3.4"/></filter><filter id="lava2" x="0" y="0" width="100%" height="100%" color-interpolation-filters="sRGB"><feTurbulence type="fractalNoise" baseFrequency="0.14" numOctaves="2" seed="2"/><feColorMatrix values="0 0 0 0 0.6  0 0 0 0 0.15  0 0 0 0 0.02  -7 0 0 0 3.0"/></filter></defs><rect x="1605.5" y="372.5" width="64" height="64" fill="none" stroke="#707070" stroke-width="1"/><polygon points="1637.0,382.0 1660.0,390.0 1637.0,395.5 1614.0,390.0" fill="#d0aa80"/><polygon points="1614.0,390.0 1637.0,395.5 1637.0,426.0 1615.0,419.0" fill="#b48e6a"/><polygon points="1637.0,395.5 1660.0,390.0 1659.0,419.0 1637.0,426.0" fill="#a88260"/><clipPath id="cc0"><polygon points="1637,395.5 1660,390 1659,419 1637,426 1615,419 1614,390"/></clipPath><g clip-path="url(#cc0)"><rect x="1613" y="380" width="48" height="48" filter="url(#mot2)" opacity="0.55"/></g><rect x="1669.5" y="372.5" width="64" height="64" fill="none" stroke="#707070" stroke-width="1"/><polygon points="1701.0,382.0 1724.0,390.0 1701.0,395.5 1678.0,390.0" fill="#c6b2a2"/><polygon points="1678.0,390.0 1701.0,395.5 1701.0,426.0 1679.0,419.0" fill="#c0a070"/><polygon points="1701.0,395.5 1724.0,390.0 1723.0,419.0 1701.0,426.0" fill="#b09464"/><path d="M1678 403.5 L1701 409.5 L1724 403.5" fill="none" stroke="#6a5440" stroke-width="0.7" opacity="0.7"/><path d="M1678 411.0 L1701 417.0 L1724 411.0" fill="none" stroke="#6a5440" stroke-width="0.7" opacity="0.7"/><path d="M1678 418.5 L1701 424.5 L1724 418.5" fill="none" stroke="#6a5440" stroke-width="0.7" opacity="0.7"/><path d="M1679 397.0 v6.5 M1703 401.5 v6.5" stroke="#6a5440" stroke-width="0.7" opacity="0.6"/><path d="M1687 399.1 v6.5 M1710 399.7 v6.5" stroke="#6a5440" stroke-width="0.7" opacity="0.6"/><path d="M1695 401.2 v6.5 M1717 397.9 v6.5" stroke="#6a5440" stroke-width="0.7" opacity="0.6"/><path d="M1683 405.5 v6.5 M1707 408.0 v6.5" stroke="#6a5440" stroke-width="0.7" opacity="0.6"/><path d="M1691 407.6 v6.5 M1714 406.1 v6.5" stroke="#6a5440" stroke-width="0.7" opacity="0.6"/><path d="M1699 409.7 v6.5 M1721 404.3 v6.5" stroke="#6a5440" stroke-width="0.7" opacity="0.6"/><path d="M1679 412.0 v6.5 M1703 416.5 v6.5" stroke="#6a5440" stroke-width="0.7" opacity="0.6"/><path d="M1687 414.1 v6.5 M1710 414.7 v6.5" stroke="#6a5440" stroke-width="0.7" opacity="0.6"/><path d="M1695 416.2 v6.5 M1717 412.9 v6.5" stroke="#6a5440" stroke-width="0.7" opacity="0.6"/><rect x="1733.5" y="372.5" width="64" height="64" fill="none" stroke="#707070" stroke-width="1"/><polygon points="1765.0,382.0 1788.0,390.0 1765.0,395.5 1742.0,390.0" fill="#c4b0a0"/><polygon points="1742.0,390.0 1765.0,395.5 1765.0,426.0 1743.0,419.0" fill="#bc9c6e"/><polygon points="1765.0,395.5 1788.0,390.0 1787.0,419.0 1765.0,426.0" fill="#ac9062"/><path d="M1742 403.5 L1765 409.5 L1788 403.5" fill="none" stroke="#6a5440" stroke-width="0.7" opacity="0.7"/><path d="M1742 411.0 L1765 417.0 L1788 411.0" fill="none" stroke="#6a5440" stroke-width="0.7" opacity="0.7"/><path d="M1742 418.5 L1765 424.5 L1788 418.5" fill="none" stroke="#6a5440" stroke-width="0.7" opacity="0.7"/><path d="M1743 397.0 v6.5 M1767 401.5 v6.5" stroke="#6a5440" stroke-width="0.7" opacity="0.6"/><path d="M1751 399.1 v6.5 M1774 399.7 v6.5" stroke="#6a5440" stroke-width="0.7" opacity="0.6"/><path d="M1759 401.2 v6.5 M1781 397.9 v6.5" stroke="#6a5440" stroke-width="0.7" opacity="0.6"/><path d="M1747 405.5 v6.5 M1771 408.0 v6.5" stroke="#6a5440" stroke-width="0.7" opacity="0.6"/><path d="M1755 407.6 v6.5 M1778 406.1 v6.5" stroke="#6a5440" stroke-width="0.7" opacity="0.6"/><path d="M1763 409.7 v6.5 M1785 404.3 v6.5" stroke="#6a5440" stroke-width="0.7" opacity="0.6"/><path d="M1743 412.0 v6.5 M1767 416.5 v6.5" stroke="#6a5440" stroke-width="0.7" opacity="0.6"/><path d="M1751 414.1 v6.5 M1774 414.7 v6.5" stroke="#6a5440" stroke-width="0.7" opacity="0.6"/><path d="M1759 416.2 v6.5 M1781 412.9 v6.5" stroke="#6a5440" stroke-width="0.7" opacity="0.6"/><rect x="1797.5" y="372.5" width="64" height="64" fill="none" stroke="#707070" stroke-width="1"/><polygon points="1829.0,382.0 1852.0,390.0 1829.0,395.5 1806.0,390.0" fill="#c4b0a0"/><polygon points="1806.0,390.0 1829.0,395.5 1829.0,426.0 1807.0,419.0" fill="#b89a6e"/><polygon points="1829.0,395.5 1852.0,390.0 1851.0,419.0 1829.0,426.0" fill="#a88e62"/><path d="M1806 403.5 L1829 409.5 L1852 403.5" fill="none" stroke="#6a5440" stroke-width="0.7" opacity="0.7"/><path d="M1806 411.0 L1829 417.0 L1852 411.0" fill="none" stroke="#6a5440" stroke-width="0.7" opacity="0.7"/><path d="M1806 418.5 L1829 424.5 L1852 418.5" fill="none" stroke="#6a5440" stroke-width="0.7" opacity="0.7"/><path d="M1807 397.0 v6.5 M1831 401.5 v6.5" stroke="#6a5440" stroke-width="0.7" opacity="0.6"/><path d="M1815 399.1 v6.5 M1838 399.7 v6.5" stroke="#6a5440" stroke-width="0.7" opacity="0.6"/><path d="M1823 401.2 v6.5 M1845 397.9 v6.5" stroke="#6a5440" stroke-width="0.7" opacity="0.6"/><path d="M1811 405.5 v6.5 M1835 408.0 v6.5" stroke="#6a5440" stroke-width="0.7" opacity="0.6"/><path d="M1819 407.6 v6.5 M1842 406.1 v6.5" stroke="#6a5440" stroke-width="0.7" opacity="0.6"/><path d="M1827 409.7 v6.5 M1849 404.3 v6.5" stroke="#6a5440" stroke-width="0.7" opacity="0.6"/><path d="M1807 412.0 v6.5 M1831 416.5 v6.5" stroke="#6a5440" stroke-width="0.7" opacity="0.6"/><path d="M1815 414.1 v6.5 M1838 414.7 v6.5" stroke="#6a5440" stroke-width="0.7" opacity="0.6"/><path d="M1823 416.2 v6.5 M1845 412.9 v6.5" stroke="#6a5440" stroke-width="0.7" opacity="0.6"/><rect x="1605.5" y="439.5" width="64" height="64" fill="none" stroke="#707070" stroke-width="1"/><polygon points="1637.0,449.0 1660.0,457.0 1637.0,462.5 1614.0,457.0" fill="#e4d8c4"/><polygon points="1614.0,457.0 1637.0,462.5 1637.0,493.0 1615.0,486.0" fill="#d4cab8"/><polygon points="1637.0,462.5 1660.0,457.0 1659.0,486.0 1637.0,493.0" fill="#c4baa8"/><rect x="1669.5" y="439.5" width="64" height="64" fill="none" stroke="#707070" stroke-width="1"/><polygon points="1701.0,449.0 1724.0,457.0 1701.0,462.5 1678.0,457.0" fill="#d4c4bc"/><polygon points="1678.0,457.0 1701.0,462.5 1701.0,493.0 1679.0,486.0" fill="#c8b8b2"/><polygon points="1701.0,462.5 1724.0,457.0 1723.0,486.0 1701.0,493.0" fill="#b8a8a2"/><clipPath id="cc5"><polygon points="1701,462.5 1724,457 1723,486 1701,493 1679,486 1678,457"/></clipPath><g clip-path="url(#cc5)"><rect x="1677" y="447" width="48" height="48" filter="url(#mot2)" opacity="0.3"/></g><rect x="1733.5" y="439.5" width="64" height="64" fill="none" stroke="#707070" stroke-width="1"/><polygon points="1765.0,449.0 1788.0,457.0 1765.0,462.5 1742.0,457.0" fill="#ccc0b4"/><polygon points="1742.0,457.0 1765.0,462.5 1765.0,493.0 1743.0,486.0" fill="#d0c8c2"/><polygon points="1765.0,462.5 1788.0,457.0 1787.0,486.0 1765.0,493.0" fill="#beb6b0"/><path d="M1742 470.5 L1765 476.5 L1788 470.5" fill="none" stroke="#6a5440" stroke-width="0.7" opacity="0.7"/><path d="M1742 478.0 L1765 484.0 L1788 478.0" fill="none" stroke="#6a5440" stroke-width="0.7" opacity="0.7"/><path d="M1742 485.5 L1765 491.5 L1788 485.5" fill="none" stroke="#6a5440" stroke-width="0.7" opacity="0.7"/><path d="M1743 464.0 v6.5 M1767 468.5 v6.5" stroke="#6a5440" stroke-width="0.7" opacity="0.6"/><path d="M1751 466.1 v6.5 M1774 466.7 v6.5" stroke="#6a5440" stroke-width="0.7" opacity="0.6"/><path d="M1759 468.2 v6.5 M1781 464.9 v6.5" stroke="#6a5440" stroke-width="0.7" opacity="0.6"/><path d="M1747 472.5 v6.5 M1771 475.0 v6.5" stroke="#6a5440" stroke-width="0.7" opacity="0.6"/><path d="M1755 474.6 v6.5 M1778 473.1 v6.5" stroke="#6a5440" stroke-width="0.7" opacity="0.6"/><path d="M1763 476.7 v6.5 M1785 471.3 v6.5" stroke="#6a5440" stroke-width="0.7" opacity="0.6"/><path d="M1743 479.0 v6.5 M1767 483.5 v6.5" stroke="#6a5440" stroke-width="0.7" opacity="0.6"/><path d="M1751 481.1 v6.5 M1774 481.7 v6.5" stroke="#6a5440" stroke-width="0.7" opacity="0.6"/><path d="M1759 483.2 v6.5 M1781 479.9 v6.5" stroke="#6a5440" stroke-width="0.7" opacity="0.6"/><rect x="1797.5" y="439.5" width="64" height="64" fill="none" stroke="#707070" stroke-width="1"/><polygon points="1829.0,449.0 1852.0,457.0 1829.0,462.5 1806.0,457.0" fill="#c8a884"/><polygon points="1806.0,457.0 1829.0,462.5 1829.0,493.0 1807.0,486.0" fill="#b8946e"/><polygon points="1829.0,462.5 1852.0,457.0 1851.0,486.0 1829.0,493.0" fill="#a88662"/><rect x="1605.5" y="506.5" width="64" height="64" fill="none" stroke="#707070" stroke-width="1"/><polygon points="1637.0,516.0 1660.0,524.0 1637.0,529.5 1614.0,524.0" fill="#d0ae88"/><polygon points="1614.0,524.0 1637.0,529.5 1637.0,560.0 1615.0,553.0" fill="#b08a66"/><polygon points="1637.0,529.5 1660.0,524.0 1659.0,553.0 1637.0,560.0" fill="#a27e5c"/><clipPath id="cc8"><polygon points="1637,529.5 1660,524 1659,553 1637,560 1615,553 1614,524"/></clipPath><g clip-path="url(#cc8)"><rect x="1613" y="514" width="48" height="48" filter="url(#mot2)" opacity="0.55"/></g><rect x="1669.5" y="506.5" width="64" height="64" fill="none" stroke="#707070" stroke-width="1"/><polygon points="1701.0,516.0 1724.0,524.0 1701.0,529.5 1678.0,524.0" fill="#d0ae88"/><polygon points="1678.0,524.0 1701.0,529.5 1701.0,560.0 1679.0,553.0" fill="#b08a66"/><polygon points="1701.0,529.5 1724.0,524.0 1723.0,553.0 1701.0,560.0" fill="#a27e5c"/><clipPath id="cc9"><polygon points="1701,529.5 1724,524 1723,553 1701,560 1679,553 1678,524"/></clipPath><g clip-path="url(#cc9)"><rect x="1677" y="514" width="48" height="48" filter="url(#mot2)" opacity="0.55"/></g><rect x="1733.5" y="506.5" width="64" height="64" fill="none" stroke="#707070" stroke-width="1"/><polygon points="1765.0,516.0 1788.0,524.0 1765.0,529.5 1742.0,524.0" fill="#f4a838"/><polygon points="1742.0,524.0 1765.0,529.5 1765.0,560.0 1743.0,553.0" fill="#f09028"/><polygon points="1765.0,529.5 1788.0,524.0 1787.0,553.0 1765.0,560.0" fill="#e07818"/><clipPath id="cc10"><polygon points="1765,529.5 1788,524 1787,553 1765,560 1743,553 1742,524"/></clipPath><g clip-path="url(#cc10)"><rect x="1741" y="514" width="48" height="48" filter="url(#lava2)" opacity="0.8"/><rect x="1741" y="514" width="48" height="48" filter="url(#lava)" opacity="0.9"/></g><rect x="1797.5" y="506.5" width="64" height="64" fill="none" stroke="#707070" stroke-width="1"/><polygon points="1829.0,516.0 1852.0,524.0 1829.0,529.5 1806.0,524.0" fill="#b47ae0"/><polygon points="1806.0,524.0 1829.0,529.5 1829.0,560.0 1807.0,553.0" fill="#9c58d0"/><polygon points="1829.0,529.5 1852.0,524.0 1851.0,553.0 1829.0,560.0" fill="#9050c0"/><rect x="1606" y="373" width="62" height="62" fill="none" stroke="#fff" stroke-width="2"/></svg>
<div style="left:1602px;top:866px;width:282px;height:173px;background:#4a4a4a;border:1px solid #fff"></div>
<div class="t" style="left:1608px;top:871px;font-family:'DejaVu Sans Mono','Liberation Mono',monospace;font-weight:bold;font-size:12.8px;color:#fff;text-shadow:1px 1px 0 #000,1px 0 0 #000,0 1px 0 #000;letter-spacing:0">EP1_rock_01_Footstep_Change</div>
<svg style="left:1603px;top:867px;" width="280" height="171" viewBox="1603 867 280 171"><defs><linearGradient id="pvt" x1="0" y1="0" x2="0" y2="1"><stop offset="0" stop-color="#e0bc98"/><stop offset="1" stop-color="#d2ac88"/></linearGradient><linearGradient id="pvl" x1="0" y1="0" x2="0" y2="1"><stop offset="0" stop-color="#b08c74"/><stop offset="1" stop-color="#98745e"/></linearGradient></defs><polygon points="1718,893 1798,904 1774,939 1682,924" fill="url(#pvt)"/><polygon points="1682,924 1774,939 1769,1020 1687,1002" fill="url(#pvl)"/><polygon points="1774,939 1798,904 1794,983 1769,1020" fill="#8c6854"/><clipPath id="pvc"><polygon points="1682,924 1774,939 1798,904 1794,983 1769,1020 1687,1002"/></clipPath><filter id="mot3" x="0" y="0" width="100%" height="100%" color-interpolation-filters="sRGB"><feTurbulence type="fractalNoise" baseFrequency="0.035" numOctaves="3" seed="8"/><feColorMatrix values="0 0 0 0 0.42  0 0 0 0 0.27  0 0 0 0 0.2  -6 0 0 0 3.0"/></filter><g clip-path="url(#pvc)"><rect x="1680" y="900" width="120" height="122" filter="url(#mot3)" opacity="0.5"/></g><path d="M1700 950 L1716 975 L1740 968 L1752 992 M1716 975 L1708 1000 M1740 968 L1746 945 L1764 956 M1698 985 L1720 1004 L1752 992 L1764 1012" stroke="#7e5a48" stroke-width="2" fill="none" opacity="0.3"/></svg>
<div style="left:0px;top:1043px;width:1920px;height:37px;background:#f0f0f0"></div>
<div class="t" style="left:2px;top:1054px;color:#1f5fe0;font-size:13px;letter-spacing:0;width:1001px;overflow:hidden">ige by placing terrain and objects from the stamp palette.&nbsp; Various settings in the map editor can be changed using the buttons in the lower right corner c</div>
<div class="t lib" style="left:1010px;top:1053px;color:#7a7a7a;font-size:11px">Selection Target</div>
<div class="btn" style="left:1095px;top:1050px;width:26px;height:22px;border-color:#e4e4e4;background:#f5f5f5"></div><svg style="left:1095px;top:1048px;" width="26" height="26" viewBox="-1.6 -1.6 29.2 29.2"><rect x="4" y="6" width="18" height="15" rx="1" fill="#5a5a5a"/><g fill="#f4f4f4"><rect x="6" y="8" width="4" height="4"/><rect x="11" y="8" width="4" height="4"/><rect x="16" y="8" width="4" height="4"/><rect x="6" y="14" width="4" height="5"/><rect x="11" y="14" width="9" height="5"/></g><g fill="#5a5a5a"><rect x="7" y="15" width="1" height="3"/><rect x="9" y="15" width="0.6" height="3"/><rect x="12" y="15" width="7" height="3"/></g></svg>
<div class="btn" style="left:1125px;top:1050px;width:26px;height:22px;border-color:#e4e4e4;background:#f5f5f5"></div><svg style="left:1125px;top:1048px;" width="26" height="26" viewBox="-1.6 -1.6 29.2 29.2"><path d="M5 9 L9.5 4 L14 9 V14 H5Z" fill="none" stroke="#5a5a5a" stroke-width="1.8"/><path d="M11 16 L16 11 L21 16 V22 H11Z" fill="#5a5a5a"/><rect x="14.5" y="17" width="3" height="3.4" fill="#f4f4f4"/><rect x="8" y="9.5" width="3" height="3" fill="#5a5a5a"/></svg>
<div class="btn sel" style="left:1155px;top:1050px;width:26px;height:22px;border-color:#e4e4e4;background:#f5f5f5"></div><svg style="left:1155px;top:1048px;" width="26" height="26" viewBox="-1.6 -1.6 29.2 29.2"><path d="M4 11 L8 5 L12 11 V22 H4Z" fill="#5a5a5a"/><path d="M13 8 H22 V22 H13Z" fill="#5a5a5a"/><g fill="#fff"><rect x="6.5" y="10" width="3" height="3.5"/><rect x="15" y="10.5" width="2" height="2"/><rect x="18.5" y="10.5" width="2" height="2"/><path d="M15.5 22 V17.5 Q17.5 15 19.5 17.5 V22Z"/><rect x="6" y="16" width="4" height="4"/></g><rect x="6" y="16" width="4" height="4" fill="url(#chk)"/></svg>
<div class="t lib" style="left:1186px;top:1053px;color:#7a7a7a;font-size:11px">Operation Axis</div>
<div class="btn sel" style="left:1264px;top:1050px;width:26px;height:22px;border-color:#e4e4e4;background:#f5f5f5"></div><svg style="left:1264px;top:1048px;" width="26" height="26" viewBox="-1.6 -1.6 29.2 29.2"><rect x="3.5" y="4" width="19" height="17" rx="2" fill="#c8304c"/><text x="13" y="18" text-anchor="middle" font-family="Liberation Sans" font-weight="bold" font-size="15" fill="#fff" textLength="14.5" lengthAdjust="spacingAndGlyphs">XZ</text></svg>
<div class="btn" style="left:1294px;top:1050px;width:26px;height:22px;border-color:#e4e4e4;background:#f5f5f5"></div><svg style="left:1294px;top:1048px;" width="26" height="26" viewBox="-1.6 -1.6 29.2 29.2"><rect x="3.5" y="4" width="19" height="17" rx="2" fill="#2e9a3a"/><text x="13" y="18" text-anchor="middle" font-family="Liberation Sans" font-weight="bold" font-size="15" fill="#fff" textLength="14.5" lengthAdjust="spacingAndGlyphs">YX</text></svg>
<div class="btn" style="left:1324px;top:1050px;width:26px;height:22px;border-color:#e4e4e4;background:#f5f5f5"></div><svg style="left:1324px;top:1048px;" width="26" height="26" viewBox="-1.6 -1.6 29.2 29.2"><rect x="3.5" y="4" width="19" height="17" rx="2" fill="#4a52b0"/><text x="13" y="18" text-anchor="middle" font-family="Liberation Sans" font-weight="bold" font-size="15" fill="#fff" textLength="14.5" lengthAdjust="spacingAndGlyphs">ZY</text></svg>
<div style="left:1355px;top:1053px;width:1px;height:18px;background:#9a9a9a"></div>
<div class="btn" style="left:1360px;top:1050px;width:26px;height:22px;border-color:#e4e4e4;background:#f5f5f5"></div><svg style="left:1360px;top:1048px;" width="26" height="26" viewBox="-1.6 -1.6 29.2 29.2"><path d="M3 14 L13 7 L22 11 V14.5 L12 21 L3 17.5Z" fill="#5a5a5a"/><path d="M9 12 L13 9.2 L17.5 11.2 L13.5 14Z" fill="#f4f4f4"/><path d="M12 5 L18 7.5 L14 10.5 L8.5 8Z" fill="#5a5a5a"/></svg>
<div class="t lib" style="left:1391px;top:1053px;color:#7a7a7a;font-size:11px">Manipulator</div>
<div class="btn sel" style="left:1457px;top:1050px;width:26px;height:22px;border-color:#e4e4e4;background:#f5f5f5"></div><svg style="left:1457px;top:1048px;" width="26" height="26" viewBox="-1.6 -1.6 29.2 29.2"><path d="M13 3 L17 8.5 H14 V14 H12 V8.5 H9Z" fill="#00b050"/><path d="M13 14 L6 20 M13 14 L20 20" stroke="#0040ff" stroke-width="0" /><path d="M13 13.5 L5.5 19" stroke="#ff2060" stroke-width="1.8"/><path d="M13 13.5 L20.5 19" stroke="#ff2060" stroke-width="1.8"/><path d="M3 21 L4.5 15.5 L8.5 20Z" fill="#0050ff"/><path d="M23 21 L21.5 15.5 L17.5 20Z" fill="#ff2060"/><path d="M8 12 L18 20 M18 12 L8 20" stroke="#0050ff" stroke-width="1.4"/></svg>
<div class="btn" style="left:1487px;top:1050px;width:26px;height:22px;border-color:#e4e4e4;background:#f5f5f5"></div><svg style="left:1487px;top:1048px;" width="26" height="26" viewBox="-1.6 -1.6 29.2 29.2"><circle cx="13" cy="13" r="8.5" fill="none" stroke="#0050ff" stroke-width="1.8"/><ellipse cx="13" cy="13" rx="4" ry="8.5" fill="none" stroke="#00a040" stroke-width="1.6"/><ellipse cx="13" cy="13" rx="8.5" ry="4" fill="none" stroke="#ff2040" stroke-width="1.6"/><circle cx="13" cy="13" r="2" fill="#ff2040"/></svg>
<div class="btn" style="left:1517px;top:1050px;width:26px;height:22px;border-color:#e4e4e4;background:#f5f5f5"></div><svg style="left:1517px;top:1048px;" width="26" height="26" viewBox="-1.6 -1.6 29.2 29.2"><rect x="10.5" y="3" width="5" height="5" fill="#00b050"/><rect x="12.2" y="8" width="1.6" height="6" fill="#00b050"/><path d="M13 13.5 L6 19" stroke="#0050ff" stroke-width="1.8"/><path d="M13 13.5 L20 19" stroke="#ff2060" stroke-width="1.8"/><rect x="3" y="17" width="5" height="5" fill="#0050ff"/><rect x="18" y="17" width="5" height="5" fill="#ff2060"/><path d="M8 10 L18 18 M18 10 L8 18" stroke="#ff2060" stroke-width="1.2"/></svg>
<div class="t lib" style="left:1548px;top:1053px;color:#7a7a7a;font-size:11px">Grids</div>
<div class="btn sel" style="left:1580px;top:1050px;width:26px;height:22px;border-color:#e4e4e4;background:#f5f5f5"></div><svg style="left:1580px;top:1048px;" width="26" height="26" viewBox="-1.6 -1.6 29.2 29.2"><path d="M5 21 V13 A8 8 0 0 1 21 13 V21 H16 V13 A3 3 0 0 0 10 13 V21Z" fill="#5a5a5a"/></svg>
<div class="btn" style="left:1610px;top:1050px;width:26px;height:22px;border-color:#e4e4e4;background:#f5f5f5"></div><svg style="left:1610px;top:1048px;" width="26" height="26" viewBox="-1.6 -1.6 29.2 29.2"><rect x="6" y="6" width="14" height="14" fill="#5a5a5a"/><rect x="7.6" y="7.6" width="2.6" height="2.6" fill="#f4f4f4"/><rect x="7.6" y="11.7" width="2.6" height="2.6" fill="#f4f4f4"/><rect x="7.6" y="15.799999999999999" width="2.6" height="2.6" fill="#f4f4f4"/><rect x="11.7" y="7.6" width="2.6" height="2.6" fill="#f4f4f4"/><rect x="11.7" y="11.7" width="2.6" height="2.6" fill="#f4f4f4"/><rect x="11.7" y="15.799999999999999" width="2.6" height="2.6" fill="#f4f4f4"/><rect x="15.799999999999999" y="7.6" width="2.6" height="2.6" fill="#f4f4f4"/><rect x="15.799999999999999" y="11.7" width="2.6" height="2.6" fill="#f4f4f4"/><rect x="15.799999999999999" y="15.799999999999999" width="2.6" height="2.6" fill="#f4f4f4"/></svg>
<div class="t lib" style="left:1641px;top:1053px;color:#7a7a7a;font-size:11px;letter-spacing:-0.5px">ON/OFF</div>
<div class="btn" style="left:1685px;top:1050px;width:26px;height:22px;border-color:#e4e4e4;background:#f5f5f5"></div><svg style="left:1685px;top:1048px;" width="26" height="26" viewBox="-1.6 -1.6 29.2 29.2"><rect x="4" y="4" width="8" height="8" rx="1" fill="#5a5a5a"/><rect x="6" y="6" width="4" height="4" fill="#f4f4f4"/><rect x="14" y="4" width="8" height="8" rx="1" fill="#5a5a5a"/><rect x="16" y="6" width="4" height="4" fill="#f4f4f4"/><rect x="4" y="14" width="8" height="8" rx="1" fill="#5a5a5a"/><rect x="6" y="16" width="4" height="4" fill="#f4f4f4"/><rect x="14" y="14" width="8" height="8" rx="1" fill="#5a5a5a"/><rect x="16" y="16" width="4" height="4" fill="#f4f4f4"/></svg>
<div class="btn sel" style="left:1715px;top:1050px;width:26px;height:22px;border-color:#e4e4e4;background:#f5f5f5"></div><svg style="left:1715px;top:1048px;" width="26" height="26" viewBox="-1.6 -1.6 29.2 29.2"><path d="M3 7 L13 3 L23 7 L21 18 L13 23 L5 18Z" fill="#5a5a5a"/><path d="M6 7.5 L13 5 L20 7.5 L13 10.5Z" fill="#fff"/><path d="M6 11 L12 14 M6.5 13.5 L12 16.5 M7 16 L12 19 M14 14 L20 11 M14 16.5 L19.6 13.5 M14 19 L19.2 16" stroke="#fff" stroke-width="0.9"/></svg>
<div class="btn sel" style="left:1745px;top:1050px;width:26px;height:22px;border-color:#e4e4e4;background:#f5f5f5"></div><svg style="left:1745px;top:1048px;" width="26" height="26" viewBox="-1.6 -1.6 29.2 29.2"><path d="M8 5 H22 V19 L18 23 H12 A8 8 0 0 1 8 5Z" fill="#5a5a5a"/><circle cx="14.5" cy="13" r="4.6" fill="none" stroke="#fff" stroke-width="1.5"/><circle cx="15.5" cy="12.5" r="2" fill="none" stroke="#fff" stroke-width="1.2"/><path d="M4 9 A10 10 0 0 0 9 22" fill="none" stroke="#5a5a5a" stroke-width="1.6" stroke-dasharray="1.5 1.8"/><path d="M9 23 H17" stroke="#5a5a5a" stroke-width="1.6" stroke-dasharray="1.5 1.8"/></svg>
<div class="btn" style="left:1775px;top:1050px;width:26px;height:22px;border-color:#e4e4e4;background:#f5f5f5"></div><svg style="left:1775px;top:1048px;" width="26" height="26" viewBox="-1.6 -1.6 29.2 29.2"><circle cx="13" cy="13" r="10" fill="#5a5a5a"/><path d="M17 5.5 L18 9 L21.5 9.5 L18.8 11.5 L19.5 15 L17 13 L14 14.5 L15 11.5 L12.8 9 L16 9Z" fill="#f4f4f4"/><path d="M14 13 L6 20 M15 15.5 L9 21 M12 11.5 L5.5 16.5" stroke="#f4f4f4" stroke-width="1.2"/></svg>
<div class="btn" style="left:1805px;top:1050px;width:26px;height:22px;border-color:#e4e4e4;background:#f5f5f5"></div><svg style="left:1805px;top:1048px;" width="26" height="26" viewBox="-1.6 -1.6 29.2 29.2"><rect x="9" y="8" width="8" height="11" rx="2" fill="#5a5a5a"/><path d="M4 5 L9 10 M22 5 L17 10 M3 13 H9 M17 13 H23 M4 22 L9 17 M22 22 L17 17" stroke="#5a5a5a" stroke-width="1.8"/><rect x="10" y="5" width="6" height="3" fill="#5a5a5a"/><rect x="10.5" y="10" width="2" height="2" fill="#f4f4f4"/><rect x="13.5" y="10" width="2" height="2" fill="#f4f4f4"/></svg>
<div class="btn" style="left:1835px;top:1050px;width:26px;height:22px;border-color:#e4e4e4;background:#f5f5f5"></div><svg style="left:1835px;top:1048px;" width="26" height="26" viewBox="-1.6 -1.6 29.2 29.2"><path d="M8 3.5 H18 Q22 13 18 22.5 H8 Q4 13 8 3.5Z" fill="none" stroke="#5a5a5a" stroke-width="2"/><path d="M11 4 Q9 13 11 22 M15 4 Q17 13 15 22 M5.5 10 H20.5 M5.5 16 H20.5" stroke="#5a5a5a" stroke-width="1.4" fill="none"/></svg>
<div class="btn" style="left:1865px;top:1050px;width:26px;height:22px;border-color:#e4e4e4;background:#f5f5f5"></div><svg style="left:1865px;top:1048px;" width="26" height="26" viewBox="-1.6 -1.6 29.2 29.2"><circle cx="13" cy="13" r="10" fill="#5a5a5a"/><g stroke="#f4f4f4" stroke-width="1.2"><path d="M13 3 L17 13 M22 8 L13 13.5 M22.5 17 L12 15 M15 22.8 L10 13 M5 19 L14 12 M3.5 10 L14 11.5"/></g></svg>
<div style="left:1914px;top:1060px;width:1px;height:12px;background:#999"></div>
<div style="left:277px;top:211px;width:1280px;height:720px;background:#f0f0f0;border:1px solid #9ab4d8;box-shadow:2px 2px 3px rgba(0,0,0,0.5)"></div>
<svg style="left:286px;top:220px;" width="16" height="16" viewBox="0 0 16 16"><rect x="0" y="0" width="16" height="16" rx="3.5" fill="#1e88f0"/><circle cx="12.60" cy="8.00" r="1.25" fill="#fff"/><circle cx="11.25" cy="11.25" r="1.25" fill="#fff"/><circle cx="8.00" cy="12.60" r="1.25" fill="#fff"/><circle cx="4.75" cy="11.25" r="1.25" fill="#fff"/><circle cx="3.40" cy="8.00" r="1.25" fill="#fff"/><circle cx="4.75" cy="4.75" r="1.25" fill="#fff"/><circle cx="8.00" cy="3.40" r="1.25" fill="#fff"/><circle cx="11.25" cy="4.75" r="1.25" fill="#fff"/></svg>
<div class="dots dots2" style="left:307px;top:218px;width:203px;height:22px;"></div>
<div class="title" style="left:326px;top:218px;font-size:20.5px;line-height:22px;transform:scaleX(0.762);">Common Event Editor</div>
<div style="left:1514px;top:212px;width:18px;height:29px;background:#606060;border-radius:0 0 5px 5px"></div>
<div style="left:1518px;top:227px;width:10px;height:10px;border:1.5px solid #fff"></div>
<div style="left:1534px;top:212px;width:18px;height:29px;background:#e06080;border-radius:0 0 5px 5px"></div>
<svg style="left:1538px;top:228px;" width="10" height="10" viewBox="0 0 10 10"><path d="M1.5 1.5 L8.5 8.5 M8.5 1.5 L1.5 8.5" stroke="#fff" stroke-width="2.2"/></svg>
<div class="t" style="left:285px;top:251px;color:#2a5fe4;font-size:13px;letter-spacing:-0.15px">ts not Placed on Map but Used throughout Game</div>
<div class="btn" style="left:287px;top:277px;width:55px;height:26px;"></div>
<svg style="left:291px;top:279px;" width="22" height="22" viewBox="0 0 22 22"><circle cx="11" cy="11" r="10.5" fill="#1a78e0"/><rect x="5" y="9.2" width="12" height="3.6" fill="#fff"/><rect x="9.2" y="5" width="3.6" height="12" fill="#fff"/></svg>
<div class="t lib" style="left:317px;top:283px;font-size:12.4px;">Add</div>
<div class="btn" style="left:345px;top:277px;width:67px;height:26px;"></div>
<svg style="left:350px;top:280px;" width="20" height="20" viewBox="0 0 20 20"><path d="M1.5 3 H7.5 L9.5 5.5 H17.5 V18 H1.5Z" fill="#555"/><rect x="5.5" y="10.5" width="8" height="2.4" fill="#f4f4f4"/><rect x="8.3" y="7.7" width="2.4" height="8" fill="#f4f4f4"/></svg>
<div class="t lib" style="left:375px;top:283px;font-size:12.4px;">Folder</div>
<div class="btn" style="left:415.5px;top:277.5px;width:24.7px;height:24.7px;"></div><svg style="left:415.5px;top:277.5px;" width="25" height="25" viewBox="0 0 25 25"><path d="M9.8 5.7 H16 L19.5 9.2 V14.8 H16.5" fill="none" stroke="#555" stroke-width="2"/><path d="M15.2 5.5 V10 H19.6" fill="none" stroke="#555" stroke-width="1.6"/><path d="M4.5 9 H12 L15.6 12.6 V20.3 H4.5Z" fill="#555"/><path d="M11.3 9.5 V13.3 H15" fill="none" stroke="#f6f6f6" stroke-width="1"/><path d="M6.8 15.3 H13.2 M6.8 17.6 H13.2" stroke="#f6f6f6" stroke-width="1.1"/></svg>
<div class="btn" style="left:443.5px;top:277.5px;width:24.7px;height:24.7px;border-color:#e6e6e6"></div><svg style="left:443.5px;top:277.5px;" width="25" height="25" viewBox="0 0 25 25"><path d="M5 7.3 H19.5 V20.3 H5Z" fill="#d4d4d4"/><path d="M9 7.5 V5.2 H15.5 V7.5" fill="none" stroke="#d4d4d4" stroke-width="1.8"/><rect x="7" y="9.3" width="10.5" height="9" fill="#ececec"/><rect x="8" y="10.3" width="8.5" height="7" fill="#d4d4d4"/></svg>
<div style="left:474px;top:276px;width:1px;height:28px;background:#aaa"></div>
<div class="btn" style="left:477.5px;top:277.5px;width:24.7px;height:24.7px;"></div><svg style="left:477.5px;top:277.5px;" width="25" height="25" viewBox="0 0 25 25"><rect x="5" y="6.8" width="15" height="2.3" fill="#555"/><rect x="9.5" y="4.8" width="6" height="2.2" fill="#555"/><path d="M6.3 10 H18.7 L17.8 20.3 H7.2Z" fill="#555"/><path d="M10.2 11.5 V17.5 M12.5 11.5 V17.5 M14.8 11.5 V17.5" stroke="#f4f4f4" stroke-width="1.1"/></svg>
<div style="left:598px;top:275px;width:1px;height:30px;background:#aaa"></div>
<div style="left:285px;top:334px;width:314px;height:26px;background:#0078d7"></div>
<div style="left:304px;top:336px;width:1px;height:351px;background-image:linear-gradient(#999 50%,transparent 50%);background-size:1px 2px"></div>
<div style="left:304px;top:726px;width:1px;height:65px;background-image:linear-gradient(#999 50%,transparent 50%);background-size:1px 2px"></div>
<svg style="left:293px;top:313px;" width="22" height="20" viewBox="0 0 22 20"><path d="M1.5 17 V3.5 Q1.5 2 3 2 H7 L9 4.5 H15.5 V7.5" fill="none" stroke="#333" stroke-width="1.8" stroke-linejoin="round"/><path d="M1.5 17.5 L5.5 8 H20.5 L16 17.5Z" fill="#333" stroke="#333" stroke-width="1.2" stroke-linejoin="round"/></svg>
<div class="t m" style="left:318px;top:314px;color:#111">Common Events</div>
<div style="left:306px;top:348px;width:10px;height:1px;background-image:linear-gradient(90deg,#999 50%,transparent 50%);background-size:2px 1px"></div>
<svg style="left:319px;top:337px;" width="20" height="20" viewBox="0 0 20.4 20.4"><rect x="0.3" y="0.3" width="13.8" height="8.2" rx="1.6" fill="#fff"/><path d="M2 8 H8 V13.2Z" fill="#fff"/><rect x="2.6" y="3.2" width="2" height="2" fill="#0078d7"/><rect x="5.9" y="3.2" width="2" height="2" fill="#0078d7"/><rect x="9.2" y="3.2" width="2" height="2" fill="#0078d7"/><rect x="7.8" y="7" width="11.4" height="12" rx="1.4" fill="#0078d7" stroke="#0078d7" stroke-width="3.2"/><rect x="7.8" y="7" width="11.4" height="12" rx="1.4" fill="#0078d7" stroke="#fff" stroke-width="2"/><rect x="14.3" y="10.2" width="1.8" height="2" fill="#fff"/><rect x="11.6" y="15" width="4.2" height="1.5" fill="#fff"/><rect x="7" y="11.3" width="4.6" height="1.7" fill="#fff"/></svg>
<div class="t m" style="left:345px;top:340px;color:#fff">Opening Control</div>
<svg style="left:577.5px;top:338px;" width="18" height="18" viewBox="0 0 18 18"><rect x="1" y="3.5" width="12.5" height="12" rx="2" fill="none" stroke="#fff" stroke-width="1.8"/><path d="M4 8.5 L7.5 12.5 L16.5 2.5" fill="none" stroke="#fff" stroke-width="2.2"/></svg>
<div style="left:306px;top:374px;width:10px;height:1px;background-image:linear-gradient(90deg,#999 50%,transparent 50%);background-size:2px 1px"></div>
<svg style="left:319px;top:363px;" width="20" height="20" viewBox="0 0 20.4 20.4"><rect x="0.3" y="0.3" width="13.8" height="8.2" rx="1.6" fill="#5a5a5a"/><path d="M2 8 H8 V13.2Z" fill="#5a5a5a"/><rect x="2.6" y="3.2" width="2" height="2" fill="#f0f0f0"/><rect x="5.9" y="3.2" width="2" height="2" fill="#f0f0f0"/><rect x="9.2" y="3.2" width="2" height="2" fill="#f0f0f0"/><rect x="7.8" y="7" width="11.4" height="12" rx="1.4" fill="#f0f0f0" stroke="#f0f0f0" stroke-width="3.2"/><rect x="7.8" y="7" width="11.4" height="12" rx="1.4" fill="#f0f0f0" stroke="#5a5a5a" stroke-width="2"/><rect x="14.3" y="10.2" width="1.8" height="2" fill="#5a5a5a"/><rect x="11.6" y="15" width="4.2" height="1.5" fill="#5a5a5a"/><rect x="7" y="11.3" width="4.6" height="1.7" fill="#5a5a5a"/></svg>
<div class="t m" style="left:345px;top:366px;color:#111">De-trapping</div>
<svg style="left:577.5px;top:364px;" width="18" height="18" viewBox="0 0 18 18"><rect x="1" y="3.5" width="12.5" height="12" rx="2" fill="none" stroke="#555" stroke-width="1.8"/><path d="M4 8.5 L7.5 12.5 L16.5 2.5" fill="none" stroke="#555" stroke-width="2.2"/></svg>
<div style="left:306px;top:400px;width:10px;height:1px;background-image:linear-gradient(90deg,#999 50%,transparent 50%);background-size:2px 1px"></div>
<svg style="left:319px;top:389px;" width="20" height="20" viewBox="0 0 20.4 20.4"><rect x="0.3" y="0.3" width="13.8" height="8.2" rx="1.6" fill="#5a5a5a"/><path d="M2 8 H8 V13.2Z" fill="#5a5a5a"/><rect x="2.6" y="3.2" width="2" height="2" fill="#f0f0f0"/><rect x="5.9" y="3.2" width="2" height="2" fill="#f0f0f0"/><rect x="9.2" y="3.2" width="2" height="2" fill="#f0f0f0"/><rect x="7.8" y="7" width="11.4" height="12" rx="1.4" fill="#f0f0f0" stroke="#f0f0f0" stroke-width="3.2"/><rect x="7.8" y="7" width="11.4" height="12" rx="1.4" fill="#f0f0f0" stroke="#5a5a5a" stroke-width="2"/><rect x="14.3" y="10.2" width="1.8" height="2" fill="#5a5a5a"/><rect x="11.6" y="15" width="4.2" height="1.5" fill="#5a5a5a"/><rect x="7" y="11.3" width="4.6" height="1.7" fill="#5a5a5a"/></svg>
<div class="t m" style="left:345px;top:392px;color:#111">Grid Move</div>
<svg style="left:577.5px;top:390px;" width="18" height="18" viewBox="0 0 18 18"><rect x="1" y="3.5" width="12.5" height="12" rx="2" fill="none" stroke="#555" stroke-width="1.8"/><path d="M4 8.5 L7.5 12.5 L16.5 2.5" fill="none" stroke="#555" stroke-width="2.2"/></svg>
<div style="left:306px;top:426px;width:10px;height:1px;background-image:linear-gradient(90deg,#999 50%,transparent 50%);background-size:2px 1px"></div>
<svg style="left:319px;top:415px;" width="20" height="20" viewBox="0 0 20.4 20.4"><rect x="0.3" y="0.3" width="13.8" height="8.2" rx="1.6" fill="#5a5a5a"/><path d="M2 8 H8 V13.2Z" fill="#5a5a5a"/><rect x="2.6" y="3.2" width="2" height="2" fill="#f0f0f0"/><rect x="5.9" y="3.2" width="2" height="2" fill="#f0f0f0"/><rect x="9.2" y="3.2" width="2" height="2" fill="#f0f0f0"/><rect x="7.8" y="7" width="11.4" height="12" rx="1.4" fill="#f0f0f0" stroke="#f0f0f0" stroke-width="3.2"/><rect x="7.8" y="7" width="11.4" height="12" rx="1.4" fill="#f0f0f0" stroke="#5a5a5a" stroke-width="2"/><rect x="14.3" y="10.2" width="1.8" height="2" fill="#5a5a5a"/><rect x="11.6" y="15" width="4.2" height="1.5" fill="#5a5a5a"/><rect x="7" y="11.3" width="4.6" height="1.7" fill="#5a5a5a"/></svg>
<div class="t m" style="left:345px;top:418px;color:#111">Add Members to Reserve at Ga...</div>
<svg style="left:577.5px;top:416px;" width="18" height="18" viewBox="0 0 18 18"><rect x="1" y="3.5" width="12.5" height="12" rx="2" fill="none" stroke="#555" stroke-width="1.8"/><path d="M4 8.5 L7.5 12.5 L16.5 2.5" fill="none" stroke="#555" stroke-width="2.2"/></svg>
<div style="left:306px;top:452px;width:10px;height:1px;background-image:linear-gradient(90deg,#999 50%,transparent 50%);background-size:2px 1px"></div>
<svg style="left:319px;top:441px;" width="20" height="20" viewBox="0 0 20.4 20.4"><rect x="0.3" y="0.3" width="13.8" height="8.2" rx="1.6" fill="#5a5a5a"/><path d="M2 8 H8 V13.2Z" fill="#5a5a5a"/><rect x="2.6" y="3.2" width="2" height="2" fill="#f0f0f0"/><rect x="5.9" y="3.2" width="2" height="2" fill="#f0f0f0"/><rect x="9.2" y="3.2" width="2" height="2" fill="#f0f0f0"/><rect x="7.8" y="7" width="11.4" height="12" rx="1.4" fill="#f0f0f0" stroke="#f0f0f0" stroke-width="3.2"/><rect x="7.8" y="7" width="11.4" height="12" rx="1.4" fill="#f0f0f0" stroke="#5a5a5a" stroke-width="2"/><rect x="14.3" y="10.2" width="1.8" height="2" fill="#5a5a5a"/><rect x="11.6" y="15" width="4.2" height="1.5" fill="#5a5a5a"/><rect x="7" y="11.3" width="4.6" height="1.7" fill="#5a5a5a"/></svg>
<div class="t m" style="left:345px;top:444px;color:#111">Status Window Open/Close Button</div>
<svg style="left:577.5px;top:442px;" width="18" height="18" viewBox="0 0 18 18"><rect x="1" y="3.5" width="12.5" height="12" rx="2" fill="none" stroke="#555" stroke-width="1.8"/></svg>
<div style="left:306px;top:478px;width:10px;height:1px;background-image:linear-gradient(90deg,#999 50%,transparent 50%);background-size:2px 1px"></div>
<svg style="left:319px;top:467px;" width="20" height="20" viewBox="0 0 20.4 20.4"><rect x="0.3" y="0.3" width="13.8" height="8.2" rx="1.6" fill="#5a5a5a"/><path d="M2 8 H8 V13.2Z" fill="#5a5a5a"/><rect x="2.6" y="3.2" width="2" height="2" fill="#f0f0f0"/><rect x="5.9" y="3.2" width="2" height="2" fill="#f0f0f0"/><rect x="9.2" y="3.2" width="2" height="2" fill="#f0f0f0"/><rect x="7.8" y="7" width="11.4" height="12" rx="1.4" fill="#f0f0f0" stroke="#f0f0f0" stroke-width="3.2"/><rect x="7.8" y="7" width="11.4" height="12" rx="1.4" fill="#f0f0f0" stroke="#5a5a5a" stroke-width="2"/><rect x="14.3" y="10.2" width="1.8" height="2" fill="#5a5a5a"/><rect x="11.6" y="15" width="4.2" height="1.5" fill="#5a5a5a"/><rect x="7" y="11.3" width="4.6" height="1.7" fill="#5a5a5a"/></svg>
<div class="t m" style="left:345px;top:470px;color:#111">Open the Mini Map: Simple</div>
<svg style="left:577.5px;top:468px;" width="18" height="18" viewBox="0 0 18 18"><rect x="1" y="3.5" width="12.5" height="12" rx="2" fill="none" stroke="#555" stroke-width="1.8"/><path d="M4 8.5 L7.5 12.5 L16.5 2.5" fill="none" stroke="#555" stroke-width="2.2"/></svg>
<div style="left:306px;top:504px;width:10px;height:1px;background-image:linear-gradient(90deg,#999 50%,transparent 50%);background-size:2px 1px"></div>
<svg style="left:319px;top:493px;" width="20" height="20" viewBox="0 0 20.4 20.4"><rect x="0.3" y="0.3" width="13.8" height="8.2" rx="1.6" fill="#5a5a5a"/><path d="M2 8 H8 V13.2Z" fill="#5a5a5a"/><rect x="2.6" y="3.2" width="2" height="2" fill="#f0f0f0"/><rect x="5.9" y="3.2" width="2" height="2" fill="#f0f0f0"/><rect x="9.2" y="3.2" width="2" height="2" fill="#f0f0f0"/><rect x="7.8" y="7" width="11.4" height="12" rx="1.4" fill="#f0f0f0" stroke="#f0f0f0" stroke-width="3.2"/><rect x="7.8" y="7" width="11.4" height="12" rx="1.4" fill="#f0f0f0" stroke="#5a5a5a" stroke-width="2"/><rect x="14.3" y="10.2" width="1.8" height="2" fill="#5a5a5a"/><rect x="11.6" y="15" width="4.2" height="1.5" fill="#5a5a5a"/><rect x="7" y="11.3" width="4.6" height="1.7" fill="#5a5a5a"/></svg>
<div class="t m" style="left:345px;top:496px;color:#111">Teleport</div>
<svg style="left:577.5px;top:494px;" width="18" height="18" viewBox="0 0 18 18"><rect x="1" y="3.5" width="12.5" height="12" rx="2" fill="none" stroke="#555" stroke-width="1.8"/><path d="M4 8.5 L7.5 12.5 L16.5 2.5" fill="none" stroke="#555" stroke-width="2.2"/></svg>
<div style="left:306px;top:530px;width:10px;height:1px;background-image:linear-gradient(90deg,#999 50%,transparent 50%);background-size:2px 1px"></div>
<svg style="left:319px;top:519px;" width="20" height="20" viewBox="0 0 20.4 20.4"><rect x="0.3" y="0.3" width="13.8" height="8.2" rx="1.6" fill="#5a5a5a"/><path d="M2 8 H8 V13.2Z" fill="#5a5a5a"/><rect x="2.6" y="3.2" width="2" height="2" fill="#f0f0f0"/><rect x="5.9" y="3.2" width="2" height="2" fill="#f0f0f0"/><rect x="9.2" y="3.2" width="2" height="2" fill="#f0f0f0"/><rect x="7.8" y="7" width="11.4" height="12" rx="1.4" fill="#f0f0f0" stroke="#f0f0f0" stroke-width="3.2"/><rect x="7.8" y="7" width="11.4" height="12" rx="1.4" fill="#f0f0f0" stroke="#5a5a5a" stroke-width="2"/><rect x="14.3" y="10.2" width="1.8" height="2" fill="#5a5a5a"/><rect x="11.6" y="15" width="4.2" height="1.5" fill="#5a5a5a"/><rect x="7" y="11.3" width="4.6" height="1.7" fill="#5a5a5a"/></svg>
<div class="t m" style="left:345px;top:522px;color:#111">Sharpness</div>
<svg style="left:577.5px;top:520px;" width="18" height="18" viewBox="0 0 18 18"><rect x="1" y="3.5" width="12.5" height="12" rx="2" fill="none" stroke="#555" stroke-width="1.8"/><path d="M4 8.5 L7.5 12.5 L16.5 2.5" fill="none" stroke="#555" stroke-width="2.2"/></svg>
<div style="left:306px;top:556px;width:10px;height:1px;background-image:linear-gradient(90deg,#999 50%,transparent 50%);background-size:2px 1px"></div>
<svg style="left:319px;top:545px;" width="20" height="20" viewBox="0 0 20.4 20.4"><rect x="0.3" y="0.3" width="13.8" height="8.2" rx="1.6" fill="#5a5a5a"/><path d="M2 8 H8 V13.2Z" fill="#5a5a5a"/><rect x="2.6" y="3.2" width="2" height="2" fill="#f0f0f0"/><rect x="5.9" y="3.2" width="2" height="2" fill="#f0f0f0"/><rect x="9.2" y="3.2" width="2" height="2" fill="#f0f0f0"/><rect x="7.8" y="7" width="11.4" height="12" rx="1.4" fill="#f0f0f0" stroke="#f0f0f0" stroke-width="3.2"/><rect x="7.8" y="7" width="11.4" height="12" rx="1.4" fill="#f0f0f0" stroke="#5a5a5a" stroke-width="2"/><rect x="14.3" y="10.2" width="1.8" height="2" fill="#5a5a5a"/><rect x="11.6" y="15" width="4.2" height="1.5" fill="#5a5a5a"/><rect x="7" y="11.3" width="4.6" height="1.7" fill="#5a5a5a"/></svg>
<div class="t m" style="left:345px;top:548px;color:#111">Item Enhancement_B1</div>
<svg style="left:577.5px;top:546px;" width="18" height="18" viewBox="0 0 18 18"><rect x="1" y="3.5" width="12.5" height="12" rx="2" fill="none" stroke="#555" stroke-width="1.8"/><path d="M4 8.5 L7.5 12.5 L16.5 2.5" fill="none" stroke="#555" stroke-width="2.2"/></svg>
<div style="left:306px;top:582px;width:10px;height:1px;background-image:linear-gradient(90deg,#999 50%,transparent 50%);background-size:2px 1px"></div>
<svg style="left:319px;top:571px;" width="20" height="20" viewBox="0 0 20.4 20.4"><rect x="0.3" y="0.3" width="13.8" height="8.2" rx="1.6" fill="#5a5a5a"/><path d="M2 8 H8 V13.2Z" fill="#5a5a5a"/><rect x="2.6" y="3.2" width="2" height="2" fill="#f0f0f0"/><rect x="5.9" y="3.2" width="2" height="2" fill="#f0f0f0"/><rect x="9.2" y="3.2" width="2" height="2" fill="#f0f0f0"/><rect x="7.8" y="7" width="11.4" height="12" rx="1.4" fill="#f0f0f0" stroke="#f0f0f0" stroke-width="3.2"/><rect x="7.8" y="7" width="11.4" height="12" rx="1.4" fill="#f0f0f0" stroke="#5a5a5a" stroke-width="2"/><rect x="14.3" y="10.2" width="1.8" height="2" fill="#5a5a5a"/><rect x="11.6" y="15" width="4.2" height="1.5" fill="#5a5a5a"/><rect x="7" y="11.3" width="4.6" height="1.7" fill="#5a5a5a"/></svg>
<div class="t m" style="left:345px;top:574px;color:#111">GameOver</div>
<svg style="left:577.5px;top:572px;" width="18" height="18" viewBox="0 0 18 18"><rect x="1" y="3.5" width="12.5" height="12" rx="2" fill="none" stroke="#555" stroke-width="1.8"/><path d="M4 8.5 L7.5 12.5 L16.5 2.5" fill="none" stroke="#555" stroke-width="2.2"/></svg>
<div style="left:306px;top:608px;width:10px;height:1px;background-image:linear-gradient(90deg,#999 50%,transparent 50%);background-size:2px 1px"></div>
<svg style="left:319px;top:598px;" width="20" height="19" viewBox="0 0 22 21"><path d="M1.5 5.5 Q1.5 4.5 2.5 4.5 H4.8 V2.8 Q4.8 1.5 6 1.5 H8.5 Q9.8 1.5 9.8 2.8 V4.5 H19.5 Q20.5 4.5 20.5 5.5 V16.5 L2 19.5Z" fill="none" stroke="#333" stroke-width="2" stroke-linejoin="round"/></svg>
<div class="t m" style="left:345px;top:600px;color:#111">Camp</div>
<svg style="left:577.5px;top:598px;" width="18" height="18" viewBox="0 0 18 18"><rect x="1" y="3.5" width="12.5" height="12" rx="2" fill="none" stroke="#555" stroke-width="1.8"/><path d="M4 8.5 L7.5 12.5 L16.5 2.5" fill="none" stroke="#555" stroke-width="2.2"/></svg>
<div style="left:306px;top:634px;width:10px;height:1px;background-image:linear-gradient(90deg,#999 50%,transparent 50%);background-size:2px 1px"></div>
<svg style="left:319px;top:624px;" width="20" height="19" viewBox="0 0 22 21"><path d="M1.5 5.5 Q1.5 4.5 2.5 4.5 H4.8 V2.8 Q4.8 1.5 6 1.5 H8.5 Q9.8 1.5 9.8 2.8 V4.5 H19.5 Q20.5 4.5 20.5 5.5 V16.5 L2 19.5Z" fill="none" stroke="#333" stroke-width="2" stroke-linejoin="round"/></svg>
<div class="t m" style="left:345px;top:626px;color:#111">Talk</div>
<svg style="left:577.5px;top:624px;" width="18" height="18" viewBox="0 0 18 18"><rect x="1" y="3.5" width="12.5" height="12" rx="2" fill="none" stroke="#555" stroke-width="1.8"/><path d="M4 8.5 L7.5 12.5 L16.5 2.5" fill="none" stroke="#555" stroke-width="2.2"/></svg>
<div style="left:306px;top:660px;width:10px;height:1px;background-image:linear-gradient(90deg,#999 50%,transparent 50%);background-size:2px 1px"></div>
<svg style="left:319px;top:650px;" width="20" height="19" viewBox="0 0 22 21"><path d="M1.5 5.5 Q1.5 4.5 2.5 4.5 H4.8 V2.8 Q4.8 1.5 6 1.5 H8.5 Q9.8 1.5 9.8 2.8 V4.5 H19.5 Q20.5 4.5 20.5 5.5 V16.5 L2 19.5Z" fill="none" stroke="#333" stroke-width="2" stroke-linejoin="round"/></svg>
<div class="t m" style="left:345px;top:652px;color:#111">Dungeon</div>
<svg style="left:577.5px;top:650px;" width="18" height="18" viewBox="0 0 18 18"><rect x="1" y="3.5" width="12.5" height="12" rx="2" fill="none" stroke="#555" stroke-width="1.8"/><path d="M4 8.5 L7.5 12.5 L16.5 2.5" fill="none" stroke="#555" stroke-width="2.2"/></svg>
<div style="left:306px;top:686px;width:10px;height:1px;background-image:linear-gradient(90deg,#999 50%,transparent 50%);background-size:2px 1px"></div>
<svg style="left:319px;top:676px;" width="20" height="19" viewBox="0 0 22 21"><path d="M1.5 5.5 Q1.5 4.5 2.5 4.5 H4.8 V2.8 Q4.8 1.5 6 1.5 H8.5 Q9.8 1.5 9.8 2.8 V4.5 H19.5 Q20.5 4.5 20.5 5.5 V16.5 L2 19.5Z" fill="none" stroke="#333" stroke-width="2" stroke-linejoin="round"/></svg>
<div class="t m" style="left:345px;top:678px;color:#111">Item Enhancement Sample</div>
<svg style="left:577.5px;top:676px;" width="18" height="18" viewBox="0 0 18 18"><rect x="1" y="3.5" width="12.5" height="12" rx="2" fill="none" stroke="#555" stroke-width="1.8"/><path d="M4 8.5 L7.5 12.5 L16.5 2.5" fill="none" stroke="#555" stroke-width="2.2"/></svg>
<svg style="left:293px;top:703px;" width="22" height="20" viewBox="0 0 22 20"><path d="M1.5 17 V3.5 Q1.5 2 3 2 H7 L9 4.5 H15.5 V7.5" fill="none" stroke="#333" stroke-width="1.8" stroke-linejoin="round"/><path d="M1.5 17.5 L5.5 8 H20.5 L16 17.5Z" fill="#333" stroke="#333" stroke-width="1.2" stroke-linejoin="round"/></svg>
<div class="t m" style="left:318px;top:704px;color:#111">Battle Events</div>
<div style="left:306px;top:738px;width:10px;height:1px;background-image:linear-gradient(90deg,#999 50%,transparent 50%);background-size:2px 1px"></div>
<svg style="left:319px;top:727px;" width="20" height="20" viewBox="0 0 20.4 20.4"><rect x="0.3" y="0.3" width="13.8" height="8.2" rx="1.6" fill="#5a5a5a"/><path d="M2 8 H8 V13.2Z" fill="#5a5a5a"/><rect x="2.6" y="3.2" width="2" height="2" fill="#f0f0f0"/><rect x="5.9" y="3.2" width="2" height="2" fill="#f0f0f0"/><rect x="9.2" y="3.2" width="2" height="2" fill="#f0f0f0"/><rect x="7.8" y="7" width="11.4" height="12" rx="1.4" fill="#f0f0f0" stroke="#f0f0f0" stroke-width="3.2"/><rect x="7.8" y="7" width="11.4" height="12" rx="1.4" fill="#f0f0f0" stroke="#5a5a5a" stroke-width="2"/><rect x="14.3" y="10.2" width="1.8" height="2" fill="#5a5a5a"/><rect x="11.6" y="15" width="4.2" height="1.5" fill="#5a5a5a"/><rect x="7" y="11.3" width="4.6" height="1.7" fill="#5a5a5a"/></svg>
<div class="t m" style="left:345px;top:730px;color:#111">After Last Battle</div>
<svg style="left:577.5px;top:728px;" width="18" height="18" viewBox="0 0 18 18"><rect x="1" y="3.5" width="12.5" height="12" rx="2" fill="none" stroke="#555" stroke-width="1.8"/><path d="M4 8.5 L7.5 12.5 L16.5 2.5" fill="none" stroke="#555" stroke-width="2.2"/></svg>
<div style="left:306px;top:764px;width:10px;height:1px;background-image:linear-gradient(90deg,#999 50%,transparent 50%);background-size:2px 1px"></div>
<svg style="left:319px;top:753px;" width="20" height="20" viewBox="0 0 20.4 20.4"><rect x="0.3" y="0.3" width="13.8" height="8.2" rx="1.6" fill="#5a5a5a"/><path d="M2 8 H8 V13.2Z" fill="#5a5a5a"/><rect x="2.6" y="3.2" width="2" height="2" fill="#f0f0f0"/><rect x="5.9" y="3.2" width="2" height="2" fill="#f0f0f0"/><rect x="9.2" y="3.2" width="2" height="2" fill="#f0f0f0"/><rect x="7.8" y="7" width="11.4" height="12" rx="1.4" fill="#f0f0f0" stroke="#f0f0f0" stroke-width="3.2"/><rect x="7.8" y="7" width="11.4" height="12" rx="1.4" fill="#f0f0f0" stroke="#5a5a5a" stroke-width="2"/><rect x="14.3" y="10.2" width="1.8" height="2" fill="#5a5a5a"/><rect x="11.6" y="15" width="4.2" height="1.5" fill="#5a5a5a"/><rect x="7" y="11.3" width="4.6" height="1.7" fill="#5a5a5a"/></svg>
<div class="t m" style="left:345px;top:756px;color:#111">Turn off the Light</div>
<svg style="left:577.5px;top:754px;" width="18" height="18" viewBox="0 0 18 18"><rect x="1" y="3.5" width="12.5" height="12" rx="2" fill="none" stroke="#555" stroke-width="1.8"/><path d="M4 8.5 L7.5 12.5 L16.5 2.5" fill="none" stroke="#555" stroke-width="2.2"/></svg>
<div style="left:306px;top:790px;width:10px;height:1px;background-image:linear-gradient(90deg,#999 50%,transparent 50%);background-size:2px 1px"></div>
<svg style="left:319px;top:779px;" width="20" height="20" viewBox="0 0 20.4 20.4"><rect x="0.3" y="0.3" width="13.8" height="8.2" rx="1.6" fill="#5a5a5a"/><path d="M2 8 H8 V13.2Z" fill="#5a5a5a"/><rect x="2.6" y="3.2" width="2" height="2" fill="#f0f0f0"/><rect x="5.9" y="3.2" width="2" height="2" fill="#f0f0f0"/><rect x="9.2" y="3.2" width="2" height="2" fill="#f0f0f0"/><rect x="7.8" y="7" width="11.4" height="12" rx="1.4" fill="#f0f0f0" stroke="#f0f0f0" stroke-width="3.2"/><rect x="7.8" y="7" width="11.4" height="12" rx="1.4" fill="#f0f0f0" stroke="#5a5a5a" stroke-width="2"/><rect x="14.3" y="10.2" width="1.8" height="2" fill="#5a5a5a"/><rect x="11.6" y="15" width="4.2" height="1.5" fill="#5a5a5a"/><rect x="7" y="11.3" width="4.6" height="1.7" fill="#5a5a5a"/></svg>
<div class="t m" style="left:345px;top:782px;color:#111">Turn on the Light</div>
<svg style="left:577.5px;top:780px;" width="18" height="18" viewBox="0 0 18 18"><rect x="1" y="3.5" width="12.5" height="12" rx="2" fill="none" stroke="#555" stroke-width="1.8"/><path d="M4 8.5 L7.5 12.5 L16.5 2.5" fill="none" stroke="#555" stroke-width="2.2"/></svg>
<div class="hdr" style="left:610px;top:249px;width:200px;height:21px;font-size:12.6px;line-height:24px">Sheet List (Lower Priority)</div>
<div class="btn" style="left:611.5px;top:275.5px;width:24.7px;height:24.7px;"></div><svg style="left:611.5px;top:275.5px;" width="25" height="25" viewBox="0 0 25 25"><rect x="5.5" y="10.5" width="14" height="4" fill="#555"/><rect x="10.5" y="5.5" width="4" height="14" fill="#555"/></svg>
<div class="btn" style="left:639.5px;top:275.5px;width:24.7px;height:24.7px;"></div><svg style="left:639.5px;top:275.5px;" width="25" height="25" viewBox="0 0 25 25"><rect x="3.8" y="3.8" width="2.8" height="17.5" fill="#555"/><rect x="9.2" y="10.5" width="11.6" height="4" fill="#555"/><rect x="13.0" y="6.7" width="4" height="11.6" fill="#555"/></svg>
<div class="btn" style="left:667.5px;top:275.5px;width:24.7px;height:24.7px;"></div><svg style="left:667.5px;top:275.5px;" width="25" height="25" viewBox="0 0 25 25"><path d="M15.5 4.5 L21 10 L13 17.5 L7.5 17.5 L8 12Z" fill="#555"/><path d="M9 12.8 L12 16 L8.3 16.8Z" fill="#f6f6f6"/><rect x="5" y="18.3" width="6.5" height="2" fill="#555"/></svg>
<div class="btn" style="left:695.5px;top:275.5px;width:24.7px;height:24.7px;"></div><svg style="left:695.5px;top:275.5px;" width="25" height="25" viewBox="0 0 25 25"><path d="M9.8 5.7 H16 L19.5 9.2 V14.8 H16.5" fill="none" stroke="#555" stroke-width="2"/><path d="M15.2 5.5 V10 H19.6" fill="none" stroke="#555" stroke-width="1.6"/><path d="M4.5 9 H12 L15.6 12.6 V20.3 H4.5Z" fill="#555"/><path d="M11.3 9.5 V13.3 H15" fill="none" stroke="#f6f6f6" stroke-width="1"/><path d="M6.8 15.3 H13.2 M6.8 17.6 H13.2" stroke="#f6f6f6" stroke-width="1.1"/></svg>
<div class="btn" style="left:723.5px;top:275.5px;width:24.7px;height:24.7px;border-color:#e6e6e6"></div><svg style="left:723.5px;top:275.5px;" width="25" height="25" viewBox="0 0 25 25"><path d="M5 7.3 H19.5 V20.3 H5Z" fill="#d4d4d4"/><path d="M9 7.5 V5.2 H15.5 V7.5" fill="none" stroke="#d4d4d4" stroke-width="1.8"/><rect x="7" y="9.3" width="10.5" height="9" fill="#ececec"/><rect x="8" y="10.3" width="8.5" height="7" fill="#d4d4d4"/></svg>
<div class="btn" style="left:751.5px;top:275.5px;width:24.7px;height:24.7px;border-color:#e6e6e6"></div><svg style="left:751.5px;top:275.5px;" width="25" height="25" viewBox="0 0 25 25"><rect x="5" y="6.8" width="15" height="2.3" fill="#d4d4d4"/><rect x="9.5" y="4.8" width="6" height="2.2" fill="#d4d4d4"/><path d="M6.3 10 H18.7 L17.8 20.3 H7.2Z" fill="#d4d4d4"/><path d="M10.2 11.5 V17.5 M12.5 11.5 V17.5 M14.8 11.5 V17.5" stroke="#f4f4f4" stroke-width="1.1"/></svg>
<div style="left:610px;top:306px;width:200px;height:530px;background:#fff;border:1px solid #7a7a7a"></div>
<div style="left:612px;top:308px;width:196px;height:19px;background:#f0f0f0"></div>
<div class="t m" style="left:617px;top:310px;">1: Start</div>
<div class="hdr" style="left:610px;top:836px;width:200px;height:22px;font-size:12.6px;line-height:24px">C# Program Assignment</div>
<div style="left:610px;top:858px;width:200px;height:24px;background:#fff;border:1px solid #7a7a7a"></div>
<div style="left:790px;top:859px;width:1px;height:22px;background:#7a7a7a"></div>
<div class="t m" style="left:616px;top:861px;">None</div>
<svg style="left:792px;top:860px;" width="16" height="18" viewBox="0 0 16 18"><path d="M8 2.5 V13 M3 8.5 L8 13.5 L13 8.5" fill="none" stroke="#444" stroke-width="2.2"/></svg>
<div class="hdr" style="left:814px;top:249px;width:214px;height:21px;font-size:12.6px;line-height:24px">Conditions to Run This Sheet</div>
<div class="btn" style="left:820px;top:277px;width:168px;height:25px;"></div>
<svg style="left:822px;top:277px;" width="26" height="25" viewBox="0 0 26 25"><rect x="6.5" y="11.0" width="13.0" height="3" fill="#555"/><rect x="11.5" y="6.0" width="3" height="13.0" fill="#555"/></svg>
<div class="t m" style="left:851px;top:281px;">Add Sheet Condition</div>
<div class="btn" style="left:994.5px;top:276.5px;width:24.7px;height:24.7px;border-color:#e6e6e6"></div><svg style="left:994.5px;top:276.5px;" width="25" height="25" viewBox="0 0 25 25"><rect x="5" y="6.8" width="15" height="2.3" fill="#d4d4d4"/><rect x="9.5" y="4.8" width="6" height="2.2" fill="#d4d4d4"/><path d="M6.3 10 H18.7 L17.8 20.3 H7.2Z" fill="#d4d4d4"/><path d="M10.2 11.5 V17.5 M12.5 11.5 V17.5 M14.8 11.5 V17.5" stroke="#f4f4f4" stroke-width="1.1"/></svg>
<div style="left:814px;top:306px;width:214px;height:576px;background:#fff;border:1px solid #7a7a7a"></div>
<div class="hdr" style="left:1032px;top:249px;width:516px;height:21px;font-size:12.6px;line-height:24px">Command Script to be Activated During Sheet Execution</div>
<div class="btn" style="left:1036.5px;top:275.5px;width:24.7px;height:24.7px;border-color:#e6e6e6"></div><svg style="left:1036.5px;top:275.5px;" width="25" height="25" viewBox="0 0 25 25"><path d="M9.8 5.7 H16 L19.5 9.2 V14.8 H16.5" fill="none" stroke="#d4d4d4" stroke-width="2"/><path d="M15.2 5.5 V10 H19.6" fill="none" stroke="#d4d4d4" stroke-width="1.6"/><path d="M4.5 9 H12 L15.6 12.6 V20.3 H4.5Z" fill="#d4d4d4"/><path d="M11.3 9.5 V13.3 H15" fill="none" stroke="#f6f6f6" stroke-width="1"/><path d="M6.8 15.3 H13.2 M6.8 17.6 H13.2" stroke="#f6f6f6" stroke-width="1.1"/></svg>
<div class="btn" style="left:1064.5px;top:275.5px;width:24.7px;height:24.7px;border-color:#e6e6e6"></div><svg style="left:1064.5px;top:275.5px;" width="25" height="25" viewBox="0 0 25 25"><path d="M8 9 L21 19 M8 17 L21 7" stroke="#d4d4d4" stroke-width="2.4"/><circle cx="7" cy="8" r="2.4" fill="none" stroke="#d4d4d4" stroke-width="1.7"/><circle cx="7" cy="18" r="2.4" fill="none" stroke="#d4d4d4" stroke-width="1.7"/></svg>
<div class="btn" style="left:1092.5px;top:275.5px;width:24.7px;height:24.7px;border-color:#e6e6e6"></div><svg style="left:1092.5px;top:275.5px;" width="25" height="25" viewBox="0 0 25 25"><path d="M5 7.3 H19.5 V20.3 H5Z" fill="#d4d4d4"/><path d="M9 7.5 V5.2 H15.5 V7.5" fill="none" stroke="#d4d4d4" stroke-width="1.8"/><rect x="7" y="9.3" width="10.5" height="9" fill="#ececec"/><rect x="8" y="10.3" width="8.5" height="7" fill="#d4d4d4"/></svg>
<div class="btn" style="left:1120.5px;top:275.5px;width:24.7px;height:24.7px;border-color:#e6e6e6"></div><svg style="left:1120.5px;top:275.5px;" width="25" height="25" viewBox="0 0 25 25"><rect x="5" y="6.8" width="15" height="2.3" fill="#d4d4d4"/><rect x="9.5" y="4.8" width="6" height="2.2" fill="#d4d4d4"/><path d="M6.3 10 H18.7 L17.8 20.3 H7.2Z" fill="#d4d4d4"/><path d="M10.2 11.5 V17.5 M12.5 11.5 V17.5 M14.8 11.5 V17.5" stroke="#f4f4f4" stroke-width="1.1"/></svg>
<div style="left:1153px;top:276px;width:1px;height:26px;background:#888"></div>
<div class="t m" style="left:1160px;top:281px;color:#666">Editing Method</div>
<div class="btn sel" style="left:1262px;top:276px;width:67px;height:25px;"></div>
<svg style="left:1266px;top:278px;" width="22" height="22" viewBox="0 0 22 22"><path d="M5 5 H15 V17 H5Z" fill="none" stroke="#444" stroke-width="2.2"/><path d="M1 8 H5 M1 14 H5 M15 11 H21 M7 2 V5 M7 17 V20" stroke="#444" stroke-width="2"/></svg>
<div class="t m" style="left:1291px;top:281px;">Panel</div>
<div class="btn" style="left:1332px;top:276px;width:63px;height:25px;"></div>
<div class="t" style="left:1337px;top:277px;font-size:5.5px;line-height:7px;font-weight:bold;color:#444;font-family:"Liberation Mono",monospace;letter-spacing:0">TEXT<br>&nbsp;TEXT<br>TEXT</div>
<div class="t m" style="left:1362px;top:281px;">Text</div>
<div class="btn" style="left:1455px;top:276px;width:76px;height:25px;"></div>
<svg style="left:1459px;top:278px;" width="24" height="22" viewBox="0 0 24 22"><path d="M2 19 V7 Q2 5.5 3.5 5.5 H7 L8.5 7.5 H11 V11 H9 L7 13" fill="none" stroke="#555" stroke-width="1.8"/><path d="M2 19.5 L6.5 12 H21 L16 19.5Z" fill="#555"/><path d="M12.5 6 L16 1.5 L19.5 6 H17.5 V10 H14.5 V6Z" fill="#555"/></svg>
<div class="t m" style="left:1485px;top:281px;">Export</div>
<div class="t" style="left:1536px;top:269px;font-size:13px;color:#5a5aa0;line-height:14px;font-family:"Liberation Sans"">»</div>
<div style="left:1032px;top:305px;width:516px;height:1px;background:#fff"></div>
<div style="left:1032px;top:306px;width:499px;height:559px;background:#556b2f;overflow:hidden"><div style="left:16px;top:16px;width:361px;height:68px;background:#c0c0c0"></div>
<div class="t" style="left:21px;top:19px;font-size:12.4px;letter-spacing:-0.3px;color:#111">Event Starts</div>
<div style="left:25px;top:37px;width:332px;height:20px;background:#fff"></div>
<div class="t" style="left:28px;top:40px;font-size:11.6px;letter-spacing:-0.3px;color:#111">No Trigger (Execute from Another Event)</div>
<svg style="left:342px;top:42px;" width="12" height="10" viewBox="0 0 12 10"><path d="M2 3 L6 7 L10 3" fill="none" stroke="#444" stroke-width="1.1"/></svg>
<div style="left:22px;top:83px;width:2px;height:32px;background:#c8c8c8"></div>
<div style="left:9px;top:89px;width:28px;height:16px;background:#b8b8b8;border-radius:8px"></div>
<svg style="left:17px;top:91px;" width="12" height="12" viewBox="0 0 12 12"><rect x="1" y="4.4" width="10" height="3.2" fill="#555"/><rect x="4.4" y="1" width="3.2" height="10" fill="#555"/></svg>
<svg style="left:15px;top:107px;" width="16" height="9" viewBox="0 0 16 9"><path d="M1.5 1 L8 7.5 L14.5 1" fill="none" stroke="#d0d0d0" stroke-width="1.6"/></svg>
<div style="left:16px;top:116px;width:361px;height:20px;background:#800080"></div>
<div class="t" style="left:21px;top:119px;font-size:12.2px;letter-spacing:-0.33px;color:#fff">Change Screen Color</div>
<svg style="left:358px;top:117px;" width="17" height="17" viewBox="0 0 17 17"><circle cx="8.5" cy="8.5" r="7.2" fill="#fff" stroke="#6a6a6a" stroke-width="1.3"/><path d="M8.5 3.5 V9.2 H13" fill="none" stroke="#5a5a5a" stroke-width="1.8"/></svg>
<div style="left:16px;top:136px;width:361px;height:33px;background:#f0f0f0"></div>
<div class="t" style="left:21px;top:139px;font-size:12.2px;line-height:15px;letter-spacing:-0.25px;color:#444;font-family:"DejaVu Sans","Noto Sans CJK JP",sans-serif">Change Screen Color to Color [A=255, R=0, G=0, B=0]<br>Over 0 Seconds</div>
<div style="left:22px;top:168px;width:2px;height:32px;background:#c8c8c8"></div>
<div style="left:9px;top:174px;width:28px;height:16px;background:#b8b8b8;border-radius:8px"></div>
<svg style="left:17px;top:176px;" width="12" height="12" viewBox="0 0 12 12"><rect x="1" y="4.4" width="10" height="3.2" fill="#555"/><rect x="4.4" y="1" width="3.2" height="10" fill="#555"/></svg>
<svg style="left:15px;top:192px;" width="16" height="9" viewBox="0 0 16 9"><path d="M1.5 1 L8 7.5 L14.5 1" fill="none" stroke="#d0d0d0" stroke-width="1.6"/></svg>
<div style="left:16px;top:201px;width:361px;height:20px;background:#4b0000"></div>
<div class="t" style="left:21px;top:204px;font-size:12.2px;letter-spacing:-0.33px;color:#fff">Teleport Player</div>
<div style="left:16px;top:221px;width:361px;height:33px;background:#f0f0f0"></div>
<div class="t" style="left:21px;top:224px;font-size:12.2px;line-height:15px;letter-spacing:-0.25px;color:#444;font-family:"DejaVu Sans","Noto Sans CJK JP",sans-serif">Teleport Player Position to Map【Dungeon_For Title Screen<br>(x,y,z)=(14.50,0.75,26.50)】</div>
<div style="left:22px;top:253px;width:2px;height:32px;background:#c8c8c8"></div>
<div style="left:9px;top:259px;width:28px;height:16px;background:#b8b8b8;border-radius:8px"></div>
<svg style="left:17px;top:261px;" width="12" height="12" viewBox="0 0 12 12"><rect x="1" y="4.4" width="10" height="3.2" fill="#555"/><rect x="4.4" y="1" width="3.2" height="10" fill="#555"/></svg>
<svg style="left:15px;top:277px;" width="16" height="9" viewBox="0 0 16 9"><path d="M1.5 1 L8 7.5 L14.5 1" fill="none" stroke="#d0d0d0" stroke-width="1.6"/></svg>
<div style="left:16px;top:286px;width:361px;height:20px;background:#4b0082"></div>
<div class="t" style="left:21px;top:289px;font-size:12.2px;letter-spacing:-0.33px;color:#fff">Play Environmental Sound</div>
<div style="left:16px;top:306px;width:361px;height:33px;background:#f0f0f0"></div>
<div class="t" style="left:21px;top:309px;font-size:12.2px;line-height:15px;letter-spacing:-0.25px;color:#444;font-family:"DejaVu Sans","Noto Sans CJK JP",sans-serif">Play Environmental Sound【BGS_Cave_03】</div>
<div style="left:22px;top:338px;width:2px;height:32px;background:#c8c8c8"></div>
<div style="left:9px;top:344px;width:28px;height:16px;background:#b8b8b8;border-radius:8px"></div>
<svg style="left:17px;top:346px;" width="12" height="12" viewBox="0 0 12 12"><rect x="1" y="4.4" width="10" height="3.2" fill="#555"/><rect x="4.4" y="1" width="3.2" height="10" fill="#555"/></svg>
<svg style="left:15px;top:362px;" width="16" height="9" viewBox="0 0 16 9"><path d="M1.5 1 L8 7.5 L14.5 1" fill="none" stroke="#d0d0d0" stroke-width="1.6"/></svg>
<div style="left:16px;top:371px;width:361px;height:20px;background:#800080"></div>
<div class="t" style="left:21px;top:374px;font-size:12.2px;letter-spacing:-0.33px;color:#fff">Change Screen Color</div>
<svg style="left:358px;top:372px;" width="17" height="17" viewBox="0 0 17 17"><circle cx="8.5" cy="8.5" r="7.2" fill="#fff" stroke="#6a6a6a" stroke-width="1.3"/><path d="M8.5 3.5 V9.2 H13" fill="none" stroke="#5a5a5a" stroke-width="1.8"/></svg>
<div style="left:16px;top:391px;width:361px;height:33px;background:#f0f0f0"></div>
<div class="t" style="left:21px;top:394px;font-size:12.2px;line-height:15px;letter-spacing:-0.25px;color:#444;font-family:"DejaVu Sans","Noto Sans CJK JP",sans-serif">Change Screen Color to Color [A=0, R=255, G=255,<br>B=255] Over 0.5 Seconds</div>
<div style="left:22px;top:423px;width:2px;height:32px;background:#c8c8c8"></div>
<div style="left:9px;top:429px;width:28px;height:16px;background:#b8b8b8;border-radius:8px"></div>
<svg style="left:17px;top:431px;" width="12" height="12" viewBox="0 0 12 12"><rect x="1" y="4.4" width="10" height="3.2" fill="#555"/><rect x="4.4" y="1" width="3.2" height="10" fill="#555"/></svg>
<svg style="left:15px;top:447px;" width="16" height="9" viewBox="0 0 16 9"><path d="M1.5 1 L8 7.5 L14.5 1" fill="none" stroke="#d0d0d0" stroke-width="1.6"/></svg>
<div style="left:16px;top:456px;width:361px;height:20px;background:#408000"></div>
<div class="t" style="left:21px;top:459px;font-size:12.2px;letter-spacing:-0.33px;color:#fff">Display Title Screen</div>
<svg style="left:358px;top:457px;" width="17" height="17" viewBox="0 0 17 17"><circle cx="8.5" cy="8.5" r="7.2" fill="#fff" stroke="#6a6a6a" stroke-width="1.3"/><path d="M8.5 3.5 V9.2 H13" fill="none" stroke="#5a5a5a" stroke-width="1.8"/></svg>
<div style="left:16px;top:476px;width:361px;height:33px;background:#f0f0f0"></div>
<div style="left:22px;top:508px;width:2px;height:32px;background:#c8c8c8"></div>
<div style="left:9px;top:514px;width:28px;height:16px;background:#b8b8b8;border-radius:8px"></div>
<svg style="left:17px;top:516px;" width="12" height="12" viewBox="0 0 12 12"><rect x="1" y="4.4" width="10" height="3.2" fill="#555"/><rect x="4.4" y="1" width="3.2" height="10" fill="#555"/></svg>
<svg style="left:15px;top:532px;" width="16" height="9" viewBox="0 0 16 9"><path d="M1.5 1 L8 7.5 L14.5 1" fill="none" stroke="#d0d0d0" stroke-width="1.6"/></svg>
<div style="left:16px;top:541px;width:361px;height:20px;background:#808000"></div>
<div class="t" style="left:21px;top:544px;font-size:12.2px;letter-spacing:-0.33px;color:#fff">Note</div>
<svg style="left:358px;top:542px;" width="17" height="17" viewBox="0 0 17 17"><circle cx="8.5" cy="8.5" r="7.2" fill="#fff" stroke="#6a6a6a" stroke-width="1.3"/><path d="M8.5 3.5 V9.2 H13" fill="none" stroke="#5a5a5a" stroke-width="1.8"/></svg>
<div style="left:16px;top:561px;width:361px;height:33px;background:#f0f0f0"></div></div>
<div style="left:1539px;top:323px;width:2px;height:61px;background:#777"></div>
<div style="left:1048px;top:873px;width:465px;height:2px;background:#888"></div>
<div style="left:282px;top:890px;width:1270px;height:36px;background:#6b6b6b"></div>
<div class="t m" style="left:284px;top:899px;color:#f2f2f2">Create a sprite animation using the imported image data.</div>
<div style="left:1253px;top:896px;width:92px;height:24px;background:#b4b4b4;border-radius:4px;border:1px solid #a8a8a8"></div>
<div class="t lib" style="left:1283px;top:901px;font-size:12.6px">Apply</div>
<div style="left:1349px;top:896px;width:92px;height:24px;background:#b4b4b4;border-radius:4px;border:1px solid #a8a8a8"></div>
<div class="t lib" style="left:1379px;top:901px;font-size:12.6px">OK</div>
<div style="left:1445px;top:896px;width:101px;height:24px;background:#b4b4b4;border-radius:4px;border:1px solid #a8a8a8"></div>
<div class="t lib" style="left:1475px;top:901px;font-size:12.6px">Cancel</div>
<svg style="left:1257px;top:898px;" width="22" height="21" viewBox="0 0 22 21"><path d="M2 2 H12 L16 6 V10 L10 10 V17 H2Z" fill="none" stroke="#555" stroke-width="1.6"/><g fill="#555"><rect x="4.5" y="5" width="2" height="2"/><rect x="8" y="5" width="2" height="2"/><rect x="4.5" y="8.5" width="2" height="2"/><rect x="4.5" y="12" width="2" height="2"/><path d="M9.5 9.5 H16 L21 15 L16.5 20 L9.5 14.5Z"/></g></svg>
<div style="left:1354px;top:899px;width:18px;height:18px;background:#5a8ae0;border-radius:2px"></div>
<svg style="left:1354px;top:899px;" width="18" height="18" viewBox="0 0 18 18"><path d="M4 9 L7.5 12.5 L14.5 5.5" fill="none" stroke="#fff" stroke-width="2.2"/></svg>
<div style="left:1450px;top:899px;width:18px;height:18px;background:#e06088;border-radius:2px"></div>
<svg style="left:1450px;top:899px;" width="18" height="18" viewBox="0 0 18 18"><path d="M4.5 4.5 L13.5 13.5 M13.5 4.5 L4.5 13.5" stroke="#fff" stroke-width="2.2"/></svg>
</body></html>
